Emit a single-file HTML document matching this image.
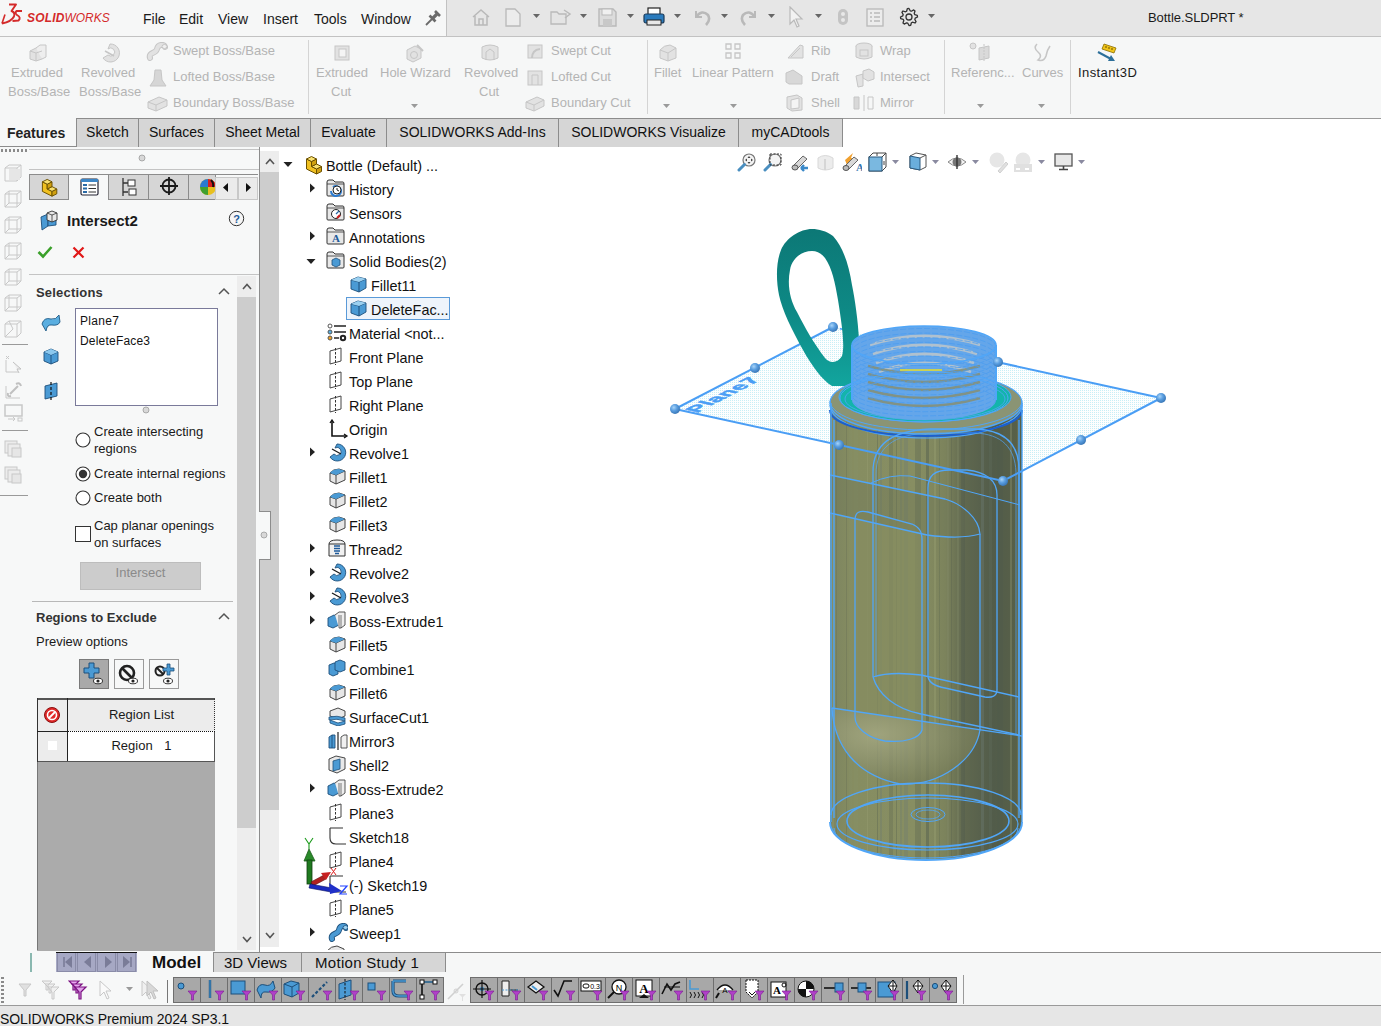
<!DOCTYPE html>
<html><head><meta charset="utf-8">
<style>
*{box-sizing:border-box;margin:0;padding:0}
html,body{width:1381px;height:1026px;overflow:hidden;background:#fff;font-family:"Liberation Sans",sans-serif;color:#000}
.a{position:absolute;display:block}
.t{position:absolute;white-space:nowrap;line-height:1}
</style></head><body>
<div class="a" style="left:0px;top:0px;width:446px;height:36px;background:#f6f7f7;"></div>
<div class="a" style="left:447px;top:0px;width:934px;height:36px;background:#e6e6e6;"></div>
<div class="a" style="left:446px;top:0px;width:1px;height:36px;background:#c2c2c2;"></div>
<div class="a" style="left:0px;top:36px;width:1381px;height:1px;background:#c2c2c2;"></div>
<div class="a" style="left:0px;top:37px;width:1381px;height:81px;background:#f6f7f7;"></div>
<svg class="a" style="left:0px;top:0px;" width="26" height="28" viewBox="0 0 26 28"><path d="M9 4.5 L16 4.5 L11.5 11 Q15.5 12.5 14 16.5 Q11.5 21.5 2 23.5" stroke="#d42a2a" stroke-width="1.9" fill="none" stroke-linejoin="round"/><path d="M5 14.5 L2 23.5" stroke="#d42a2a" stroke-width="1.6"/><path d="M22 11 L16.5 11 Q14.5 13 17 15 Q21.5 17.5 18.5 20.5 L12.5 21" stroke="#d42a2a" stroke-width="1.9" fill="none" stroke-linejoin="round"/></svg>
<div class="t" style="left:27px;top:12px;font-size:12px;color:#d42a2a;font-style:italic;letter-spacing:0px;transform-origin:0 0;transform:scaleX(0.995)"><b style="letter-spacing:0.2px">SOLID</b>WORKS</div>
<div class="t" style="left:143px;top:12px;font-size:14px;color:#1a1a1a;font-weight:normal;">File</div>
<div class="t" style="left:179px;top:12px;font-size:14px;color:#1a1a1a;font-weight:normal;">Edit</div>
<div class="t" style="left:218px;top:12px;font-size:14px;color:#1a1a1a;font-weight:normal;">View</div>
<div class="t" style="left:263px;top:12px;font-size:14px;color:#1a1a1a;font-weight:normal;">Insert</div>
<div class="t" style="left:314px;top:12px;font-size:14px;color:#1a1a1a;font-weight:normal;">Tools</div>
<div class="t" style="left:361px;top:12px;font-size:14px;color:#1a1a1a;font-weight:normal;">Window</div>
<svg class="a" style="left:424px;top:8px;" width="19" height="19" viewBox="0 0 19 19"><path d="M2 17 L8 11" stroke="#6a6a6a" stroke-width="1.8"/><path d="M5.5 7.5 L11.5 13.5" stroke="#6a6a6a" stroke-width="2.6"/><path d="M8.5 10.5 L13.5 5.5" stroke="#6a6a6a" stroke-width="3.2"/><path d="M11 3 L16 8" stroke="#6a6a6a" stroke-width="2.6"/></svg>
<svg class="a" style="left:471px;top:8px;" width="20" height="18" viewBox="0 0 20 18"><path d="M2 9 L10 2 L18 9 M4 8 V17 H16 V8 M8 17 V11 H12 V17" stroke="#b9b9b9" stroke-width="1.5" fill="none"/></svg>
<svg class="a" style="left:505px;top:8px;" width="16" height="19" viewBox="0 0 16 19"><path d="M1 1 H10 L15 6 V18 H1 Z" stroke="#b9b9b9" stroke-width="1.3" fill="#ececec"/></svg>
<svg class="a" style="left:533px;top:14px;" width="8" height="5" viewBox="0 0 8 5"><path d="M0 0 H7 L3.5 4 Z" fill="#666"/></svg>
<svg class="a" style="left:550px;top:8px;" width="22" height="18" viewBox="0 0 22 18"><path d="M1 4 H7 L9 6 H16 V16 H1 Z" stroke="#b9b9b9" stroke-width="1.3" fill="#e4e4e4"/><path d="M14 2 L20 6 L15 10" stroke="#b9b9b9" stroke-width="1.5" fill="none"/></svg>
<svg class="a" style="left:580px;top:14px;" width="8" height="5" viewBox="0 0 8 5"><path d="M0 0 H7 L3.5 4 Z" fill="#666"/></svg>
<svg class="a" style="left:598px;top:8px;" width="19" height="19" viewBox="0 0 19 19"><path d="M1 1 H15 L18 4 V18 H1 Z" stroke="#b9b9b9" stroke-width="1.4" fill="#dcdcdc"/><rect x="4" y="1" width="10" height="6" fill="#f0f0f0" stroke="#b9b9b9"/><rect x="5" y="11" width="9" height="7" fill="#c8c8c8"/></svg>
<svg class="a" style="left:627px;top:14px;" width="8" height="5" viewBox="0 0 8 5"><path d="M0 0 H7 L3.5 4 Z" fill="#666"/></svg>
<svg class="a" style="left:643px;top:7px;" width="22" height="20" viewBox="0 0 22 20"><rect x="5" y="1" width="12" height="7" fill="#fff" stroke="#222" stroke-width="1.2"/><rect x="1" y="7" width="20" height="9" rx="2" fill="#2a7bbd" stroke="#1b3b5a" stroke-width="1.2"/><rect x="4" y="13" width="14" height="5" fill="#e8e8e8" stroke="#222"/></svg>
<svg class="a" style="left:674px;top:14px;" width="8" height="5" viewBox="0 0 8 5"><path d="M0 0 H7 L3.5 4 Z" fill="#666"/></svg>
<svg class="a" style="left:692px;top:8px;" width="20" height="18" viewBox="0 0 20 18"><path d="M4 3 V9 H10" stroke="#b9b9b9" stroke-width="2" fill="none"/><path d="M4 9 Q10 1 16 7 Q19 12 14 17" stroke="#b9b9b9" stroke-width="2.6" fill="none"/></svg>
<svg class="a" style="left:721px;top:14px;" width="8" height="5" viewBox="0 0 8 5"><path d="M0 0 H7 L3.5 4 Z" fill="#666"/></svg>
<svg class="a" style="left:739px;top:8px;" width="20" height="18" viewBox="0 0 20 18"><path d="M16 3 V9 H10" stroke="#b9b9b9" stroke-width="2" fill="none"/><path d="M16 9 Q10 1 4 7 Q1 12 6 17" stroke="#b9b9b9" stroke-width="2.6" fill="none"/></svg>
<svg class="a" style="left:768px;top:14px;" width="8" height="5" viewBox="0 0 8 5"><path d="M0 0 H7 L3.5 4 Z" fill="#666"/></svg>
<svg class="a" style="left:788px;top:6px;" width="16" height="22" viewBox="0 0 16 22"><path d="M2 1 L14 13 H8 L11 20 L9 21 L6 14 L2 18 Z" stroke="#b9b9b9" stroke-width="1.2" fill="#f2f2f2"/></svg>
<svg class="a" style="left:815px;top:14px;" width="8" height="5" viewBox="0 0 8 5"><path d="M0 0 H7 L3.5 4 Z" fill="#666"/></svg>
<svg class="a" style="left:837px;top:8px;" width="12" height="18" viewBox="0 0 12 18"><rect x="1" y="1" width="10" height="16" rx="5" fill="#c4c4c4"/><circle cx="6" cy="6" r="2" fill="#e8e8e8"/><circle cx="6" cy="12" r="2" fill="#e8e8e8"/></svg>
<svg class="a" style="left:866px;top:8px;" width="19" height="19" viewBox="0 0 19 19"><rect x="1" y="1" width="16" height="17" fill="#ececec" stroke="#b9b9b9" stroke-width="1.3"/><path d="M4 5 H6 M8 5 H14 M4 9 H6 M8 9 H14 M4 13 H6 M8 13 H14" stroke="#b9b9b9" stroke-width="1.5"/></svg>
<svg class="a" style="left:899px;top:7px;" width="20" height="20" viewBox="0 0 20 20"><path d="M18.3 8.3 L18.5 10.0 L16.2 11.2 L15.8 12.4 L17.1 14.7 L16.0 16.0 L13.5 15.2 L12.4 15.8 L11.7 18.3 L10.0 18.5 L8.8 16.2 L7.6 15.8 L5.3 17.1 L4.0 16.0 L4.8 13.5 L4.2 12.4 L1.7 11.7 L1.5 10.0 L3.8 8.8 L4.2 7.6 L2.9 5.3 L4.0 4.0 L6.5 4.8 L7.6 4.2 L8.3 1.7 L10.0 1.5 L11.2 3.8 L12.4 4.2 L14.7 2.9 L16.0 4.0 L15.2 6.5 L15.8 7.6 Z" fill="none" stroke="#333" stroke-width="1.3" stroke-linejoin="round"/><circle cx="10" cy="10" r="3" fill="none" stroke="#333" stroke-width="1.3"/></svg>
<svg class="a" style="left:928px;top:14px;" width="8" height="5" viewBox="0 0 8 5"><path d="M0 0 H7 L3.5 4 Z" fill="#666"/></svg>
<div class="t" style="left:1148px;top:11px;font-size:13px;color:#1a1a1a;font-weight:normal;letter-spacing:-0.05px">Bottle.SLDPRT *</div>
<div class="a" style="left:308px;top:40px;width:1px;height:74px;background:#d4d4d4;"></div>
<div class="a" style="left:647px;top:40px;width:1px;height:74px;background:#d4d4d4;"></div>
<div class="a" style="left:944px;top:40px;width:1px;height:74px;background:#d4d4d4;"></div>
<div class="a" style="left:1070px;top:40px;width:1px;height:74px;background:#d4d4d4;"></div>
<svg class="a" style="left:28px;top:43px;" width="20" height="19" viewBox="0 0 20 19"><path d="M2 8 L8 5 L14 8 V16 L8 18 L2 16 Z" fill="#e2e2e2" stroke="#c6c6c6"/><path d="M8 5 L12 2 H18 V14 L14 16" fill="#eeeeee" stroke="#c6c6c6"/><path d="M2 8 L8 10 L14 8 M8 10 V18" stroke="#c6c6c6" fill="none"/></svg>
<div class="t" style="left:11px;top:66px;font-size:13px;color:#b4b4b4;font-weight:normal;">Extruded</div>
<div class="t" style="left:8px;top:85px;font-size:13px;color:#b4b4b4;font-weight:normal;">Boss/Base</div>
<svg class="a" style="left:100px;top:43px;" width="20" height="20" viewBox="0 0 20 20"><path d="M10 1 A9 9 0 1 1 3 15 L8 12 A4 4 0 1 0 8 6 Z" fill="#e2e2e2" stroke="#c6c6c6"/><path d="M5 8 L14 13" stroke="#c6c6c6" stroke-width="1.5"/></svg>
<div class="t" style="left:81px;top:66px;font-size:13px;color:#b4b4b4;font-weight:normal;">Revolved</div>
<div class="t" style="left:79px;top:85px;font-size:13px;color:#b4b4b4;font-weight:normal;">Boss/Base</div>
<svg class="a" style="left:146px;top:42px;" width="22" height="19" viewBox="0 0 22 19"><path d="M4 16 C2 10 10 12 11 7 C12 2 18 2 19 5" stroke="#c6c6c6" stroke-width="6" fill="none" stroke-linecap="round"/><path d="M4 16 C2 10 10 12 11 7 C12 2 18 2 19 5" stroke="#e2e2e2" stroke-width="4" fill="none" stroke-linecap="round"/><ellipse cx="18.5" cy="4.5" rx="2.5" ry="2" fill="#f0f0f0" stroke="#c6c6c6"/></svg>
<div class="t" style="left:173px;top:44px;font-size:13px;color:#b4b4b4;font-weight:normal;">Swept Boss/Base</div>
<svg class="a" style="left:149px;top:68px;" width="18" height="19" viewBox="0 0 18 19"><path d="M6 2 H12 L13 12 L17 18 H1 L5 12 Z" fill="#d6d6d6" stroke="#c6c6c6"/></svg>
<div class="t" style="left:173px;top:70px;font-size:13px;color:#b4b4b4;font-weight:normal;">Lofted Boss/Base</div>
<svg class="a" style="left:147px;top:94px;" width="22" height="18" viewBox="0 0 22 18"><path d="M1 8 L12 3 L20 6 V12 L9 17 L1 14 Z" fill="#e2e2e2" stroke="#c6c6c6"/><path d="M1 8 L9 11 L20 6 M9 11 V17" stroke="#c6c6c6" fill="none"/></svg>
<div class="t" style="left:173px;top:96px;font-size:13px;color:#b4b4b4;font-weight:normal;">Boundary Boss/Base</div>
<svg class="a" style="left:333px;top:43px;" width="19" height="19" viewBox="0 0 19 19"><rect x="2" y="3" width="14" height="14" fill="#e2e2e2" stroke="#c6c6c6"/><rect x="6" y="6" width="7" height="8" fill="#f4f4f4" stroke="#c6c6c6"/></svg>
<div class="t" style="left:316px;top:66px;font-size:13px;color:#b4b4b4;font-weight:normal;">Extruded</div>
<div class="t" style="left:331px;top:85px;font-size:13px;color:#b4b4b4;font-weight:normal;">Cut</div>
<svg class="a" style="left:405px;top:42px;" width="20" height="21" viewBox="0 0 20 21"><path d="M2 8 L10 4 L16 7 V16 L8 20 L2 17 Z" fill="#e2e2e2" stroke="#c6c6c6"/><circle cx="9" cy="13" r="3.5" fill="none" stroke="#c6c6c6"/><path d="M12 3 L18 9" stroke="#c6c6c6" stroke-width="2"/></svg>
<div class="t" style="left:380px;top:66px;font-size:13px;color:#b4b4b4;font-weight:normal;">Hole Wizard</div>
<svg class="a" style="left:411px;top:104px;" width="8" height="5" viewBox="0 0 8 5"><path d="M0 0 H7 L3.5 4 Z" fill="#9a9a9a"/></svg>
<svg class="a" style="left:480px;top:43px;" width="20" height="19" viewBox="0 0 20 19"><path d="M2 4 Q10 0 18 4 V15 Q10 19 2 15 Z" fill="#e2e2e2" stroke="#c6c6c6"/><path d="M10 6 L6 9 V17 M10 6 L14 9 V17" stroke="#c6c6c6" fill="none"/></svg>
<div class="t" style="left:464px;top:66px;font-size:13px;color:#b4b4b4;font-weight:normal;">Revolved</div>
<div class="t" style="left:479px;top:85px;font-size:13px;color:#b4b4b4;font-weight:normal;">Cut</div>
<svg class="a" style="left:526px;top:42px;" width="18" height="18" viewBox="0 0 18 18"><rect x="2" y="3" width="14" height="13" fill="#e2e2e2" stroke="#c6c6c6"/><path d="M6 16 Q6 8 14 7" stroke="#c6c6c6" fill="none" stroke-width="2"/></svg>
<div class="t" style="left:551px;top:44px;font-size:13px;color:#b4b4b4;font-weight:normal;">Swept Cut</div>
<svg class="a" style="left:526px;top:68px;" width="18" height="19" viewBox="0 0 18 19"><rect x="2" y="3" width="14" height="14" fill="#e2e2e2" stroke="#c6c6c6"/><path d="M6 17 V7 H12 V17" stroke="#c6c6c6" fill="none"/></svg>
<div class="t" style="left:551px;top:70px;font-size:13px;color:#b4b4b4;font-weight:normal;">Lofted Cut</div>
<svg class="a" style="left:525px;top:94px;" width="20" height="18" viewBox="0 0 20 18"><path d="M1 8 L12 3 L19 6 V12 L9 17 L1 14 Z" fill="#e2e2e2" stroke="#c6c6c6"/><path d="M1 8 L9 11 L19 6 M9 11 V17" stroke="#c6c6c6" fill="none"/></svg>
<div class="t" style="left:551px;top:96px;font-size:13px;color:#b4b4b4;font-weight:normal;">Boundary Cut</div>
<svg class="a" style="left:658px;top:43px;" width="20" height="19" viewBox="0 0 20 19"><path d="M2 7 Q6 2 12 2 L18 5 V15 L10 18 L2 15 Z" fill="#e2e2e2" stroke="#c6c6c6"/><path d="M2 7 L10 10 L18 5 M10 10 V18" stroke="#c6c6c6" fill="none"/></svg>
<div class="t" style="left:654px;top:66px;font-size:13px;color:#b4b4b4;font-weight:normal;">Fillet</div>
<svg class="a" style="left:663px;top:104px;" width="8" height="5" viewBox="0 0 8 5"><path d="M0 0 H7 L3.5 4 Z" fill="#9a9a9a"/></svg>
<svg class="a" style="left:725px;top:43px;" width="18" height="18" viewBox="0 0 18 18"><path d="M1 1 H6 V6 H1 Z M10 1 H15 V6 H10 Z M1 10 H6 V15 H1 Z M10 10 H15 V15 H10 Z" fill="none" stroke="#c6c6c6" stroke-width="1.3"/></svg>
<div class="t" style="left:692px;top:66px;font-size:13px;color:#b4b4b4;font-weight:normal;">Linear Pattern</div>
<svg class="a" style="left:730px;top:104px;" width="8" height="5" viewBox="0 0 8 5"><path d="M0 0 H7 L3.5 4 Z" fill="#9a9a9a"/></svg>
<svg class="a" style="left:786px;top:42px;" width="19" height="19" viewBox="0 0 19 19"><path d="M2 16 L14 3 L17 4 V16 Z" fill="#e2e2e2" stroke="#c6c6c6"/><path d="M5 15 L14 6" stroke="#c6c6c6"/></svg>
<div class="t" style="left:811px;top:44px;font-size:13px;color:#b4b4b4;font-weight:normal;">Rib</div>
<svg class="a" style="left:785px;top:68px;" width="20" height="18" viewBox="0 0 20 18"><path d="M1 5 L8 2 L17 8 V16 H4 L1 14 Z" fill="#d8d8d8" stroke="#c6c6c6"/></svg>
<div class="t" style="left:811px;top:70px;font-size:13px;color:#b4b4b4;font-weight:normal;">Draft</div>
<svg class="a" style="left:785px;top:94px;" width="19" height="18" viewBox="0 0 19 18"><path d="M2 3 L12 1 L17 4 V16 L7 17 L2 14 Z" fill="#e2e2e2" stroke="#c6c6c6"/><path d="M6 6 L14 4 V14 L6 15 Z" fill="#f4f4f4" stroke="#c6c6c6"/></svg>
<div class="t" style="left:811px;top:96px;font-size:13px;color:#b4b4b4;font-weight:normal;">Shell</div>
<svg class="a" style="left:854px;top:42px;" width="20" height="19" viewBox="0 0 20 19"><ellipse cx="10" cy="4" rx="8" ry="3" fill="#e2e2e2" stroke="#c6c6c6"/><path d="M2 4 V15 Q10 19 18 15 V4" fill="#e2e2e2" stroke="#c6c6c6"/><rect x="6" y="8" width="8" height="6" fill="none" stroke="#c6c6c6"/></svg>
<div class="t" style="left:880px;top:44px;font-size:13px;color:#b4b4b4;font-weight:normal;">Wrap</div>
<svg class="a" style="left:855px;top:68px;" width="20" height="20" viewBox="0 0 20 20"><path d="M1 8 L8 6 V18 L3 19 Z" fill="#e2e2e2" stroke="#c6c6c6"/><path d="M8 3 L14 1 L19 4 V11 L13 13 L8 10 Z" fill="#e2e2e2" stroke="#c6c6c6"/></svg>
<div class="t" style="left:880px;top:70px;font-size:13px;color:#b4b4b4;font-weight:normal;">Intersect</div>
<svg class="a" style="left:853px;top:94px;" width="22" height="18" viewBox="0 0 22 18"><path d="M1 3 H6 V15 H1 Z" fill="#d8d8d8" stroke="#c6c6c6"/><path d="M11 1 V17" stroke="#c6c6c6"/><path d="M15 3 H20 V15 H15 Z" fill="none" stroke="#c6c6c6"/></svg>
<div class="t" style="left:880px;top:96px;font-size:13px;color:#b4b4b4;font-weight:normal;">Mirror</div>
<svg class="a" style="left:969px;top:42px;" width="24" height="20" viewBox="0 0 24 20"><circle cx="4" cy="4" r="3" fill="#e2e2e2" stroke="#c6c6c6"/><path d="M10 6 L20 4 V16 L10 18 Z" fill="#dadada" stroke="#c6c6c6"/><path d="M15 2 V20" stroke="#c6c6c6" stroke-dasharray="2 1"/></svg>
<div class="t" style="left:951px;top:66px;font-size:13px;color:#b4b4b4;font-weight:normal;">Referenc...</div>
<svg class="a" style="left:977px;top:104px;" width="8" height="5" viewBox="0 0 8 5"><path d="M0 0 H7 L3.5 4 Z" fill="#9a9a9a"/></svg>
<svg class="a" style="left:1032px;top:42px;" width="20" height="20" viewBox="0 0 20 20"><path d="M5 2 Q1 6 6 10 Q11 14 6 18 Q12 20 14 14 Q15 8 18 4" stroke="#c6c6c6" stroke-width="1.6" fill="none"/></svg>
<div class="t" style="left:1022px;top:66px;font-size:13px;color:#b4b4b4;font-weight:normal;">Curves</div>
<svg class="a" style="left:1038px;top:104px;" width="8" height="5" viewBox="0 0 8 5"><path d="M0 0 H7 L3.5 4 Z" fill="#9a9a9a"/></svg>
<svg class="a" style="left:1097px;top:43px;" width="20" height="19" viewBox="0 0 20 19"><path d="M7 1 L19 5 L17 10 L5 6 Z" fill="#f0c419" stroke="#8a6d00" stroke-width="0.8"/><path d="M9 3 V5 M12 4 V6 M15 5 V7" stroke="#6a5200"/><path d="M1 9 L14 16" stroke="#2d6f9a" stroke-width="2"/><path d="M11 18 L18 18 L14 12 Z" fill="#2d6f9a"/></svg>
<div class="t" style="left:1078px;top:66px;font-size:13px;color:#1a1a1a;font-weight:normal;letter-spacing:0.4px">Instant3D</div>
<div class="a" style="left:76px;top:118px;width:1305px;height:1px;background:#9a9a9a;"></div>
<div class="a" style="left:0px;top:118px;width:76px;height:28px;background:#f6f7f7;"></div>
<div class="a" style="left:0px;top:146px;width:842px;height:1px;background:#8c8c8c;"></div>
<div class="t" style="left:7px;top:126px;font-size:14px;color:#222;font-weight:bold;">Features</div>
<div class="a" style="left:76px;top:118px;width:63px;height:29px;background:#d6d6d6;border:1px solid #8c8c8c;border-bottom:none"></div>
<div class="t" style="left:76px;width:63px;text-align:center;top:125px;font-size:14px;color:#111">Sketch</div>
<div class="a" style="left:138px;top:118px;width:77px;height:29px;background:#d6d6d6;border:1px solid #8c8c8c;border-bottom:none"></div>
<div class="t" style="left:138px;width:77px;text-align:center;top:125px;font-size:14px;color:#111">Surfaces</div>
<div class="a" style="left:214px;top:118px;width:97px;height:29px;background:#d6d6d6;border:1px solid #8c8c8c;border-bottom:none"></div>
<div class="t" style="left:214px;width:97px;text-align:center;top:125px;font-size:14px;color:#111">Sheet Metal</div>
<div class="a" style="left:310px;top:118px;width:77px;height:29px;background:#d6d6d6;border:1px solid #8c8c8c;border-bottom:none"></div>
<div class="t" style="left:310px;width:77px;text-align:center;top:125px;font-size:14px;color:#111">Evaluate</div>
<div class="a" style="left:386px;top:118px;width:173px;height:29px;background:#d6d6d6;border:1px solid #8c8c8c;border-bottom:none"></div>
<div class="t" style="left:386px;width:173px;text-align:center;top:125px;font-size:14px;color:#111">SOLIDWORKS Add-Ins</div>
<div class="a" style="left:558px;top:118px;width:181px;height:29px;background:#d6d6d6;border:1px solid #8c8c8c;border-bottom:none"></div>
<div class="t" style="left:558px;width:181px;text-align:center;top:125px;font-size:14px;color:#111">SOLIDWORKS Visualize</div>
<div class="a" style="left:738px;top:118px;width:105px;height:29px;background:#d6d6d6;border:1px solid #8c8c8c;border-bottom:none"></div>
<div class="t" style="left:738px;width:105px;text-align:center;top:125px;font-size:14px;color:#111">myCADtools</div>
<div class="a" style="left:0px;top:147px;width:259px;height:805px;background:#f7f8f8;"></div>
<div class="a" style="left:1px;top:149px;width:26px;height:3px;background:repeating-linear-gradient(90deg,#8a8a8a 0 2px,transparent 2px 4px)"></div>
<svg class="a" style="left:4px;top:164px;" width="19" height="19" viewBox="0 0 19 19"><path d="M1 4 L5 1 H17 V13 L13 17 H1 Z" fill="none" stroke="#c8c8c8"/><path d="M1 4 H13 V17 M13 4 L17 1" stroke="#c8c8c8" fill="none"/><rect x="5" y="5" width="11" height="11" fill="#e6e6e6"/></svg>
<svg class="a" style="left:4px;top:190px;" width="19" height="19" viewBox="0 0 19 19"><path d="M1 4 L5 1 H17 V13 L13 17 H1 Z" fill="none" stroke="#c8c8c8"/><path d="M1 4 H13 V17 M13 4 L17 1" stroke="#c8c8c8" fill="none"/><path d="M5 1 V13 H17 M1 17 L5 13" stroke="#c8c8c8" fill="none"/></svg>
<svg class="a" style="left:4px;top:216px;" width="19" height="19" viewBox="0 0 19 19"><path d="M1 4 L5 1 H17 V13 L13 17 H1 Z" fill="none" stroke="#c8c8c8"/><path d="M1 4 H13 V17 M13 4 L17 1" stroke="#c8c8c8" fill="none"/><path d="M5 1 V13 H17 M1 17 L5 13" stroke="#c8c8c8" fill="none"/></svg>
<svg class="a" style="left:4px;top:242px;" width="19" height="19" viewBox="0 0 19 19"><path d="M1 4 L5 1 H17 V13 L13 17 H1 Z" fill="none" stroke="#c8c8c8"/><path d="M1 4 H13 V17 M13 4 L17 1" stroke="#c8c8c8" fill="none"/><path d="M5 1 V13 H17 M1 17 L5 13" stroke="#c8c8c8" fill="none"/></svg>
<svg class="a" style="left:4px;top:268px;" width="19" height="19" viewBox="0 0 19 19"><path d="M1 4 L5 1 H17 V13 L13 17 H1 Z" fill="none" stroke="#c8c8c8"/><path d="M1 4 H13 V17 M13 4 L17 1" stroke="#c8c8c8" fill="none"/><path d="M5 1 V13 H17 M1 17 L5 13" stroke="#c8c8c8" fill="none"/></svg>
<svg class="a" style="left:4px;top:294px;" width="19" height="19" viewBox="0 0 19 19"><path d="M1 4 L5 1 H17 V13 L13 17 H1 Z" fill="none" stroke="#c8c8c8"/><path d="M1 4 H13 V17 M13 4 L17 1" stroke="#c8c8c8" fill="none"/><path d="M5 1 V13 H17 M1 17 L5 13" stroke="#c8c8c8" fill="none"/></svg>
<svg class="a" style="left:4px;top:320px;" width="19" height="19" viewBox="0 0 19 19"><path d="M1 4 L5 1 H17 V13 L13 17 H1 Z" fill="none" stroke="#c8c8c8"/><path d="M1 4 L13 4 L17 1 M13 4 V17 M5 1 L9 9 L1 17" stroke="#c8c8c8" fill="none"/></svg>
<div class="a" style="left:2px;top:344px;width:26px;height:1px;background:#9a9a9a;"></div>
<svg class="a" style="left:4px;top:354px;" width="20" height="20" viewBox="0 0 20 20"><path d="M2 6 V18 H14" stroke="#c8c8c8" fill="none"/><path d="M2 2 L5 5 M5 2 L2 5" stroke="#c8c8c8"/><path d="M9 8 L17 15 L13 15 L15 19" stroke="#c0c0c0" fill="#eee"/></svg>
<svg class="a" style="left:4px;top:380px;" width="20" height="20" viewBox="0 0 20 20"><path d="M2 6 V18 H16" stroke="#c8c8c8" fill="none"/><path d="M6 14 L14 6 M12 4 Q16 2 17 6 M7 16 Q3 17 4 13" stroke="#c0c0c0" stroke-width="2" fill="none"/></svg>
<svg class="a" style="left:4px;top:404px;" width="20" height="18" viewBox="0 0 20 18"><rect x="1" y="1" width="17" height="11" fill="none" stroke="#c8c8c8" stroke-width="1.5"/><path d="M4 15 H11 L9 13 M11 15 L9 17" stroke="#c8c8c8" fill="none"/><rect x="14" y="14" width="4" height="3" fill="none" stroke="#c8c8c8"/></svg>
<div class="a" style="left:2px;top:430px;width:26px;height:1px;background:#9a9a9a;"></div>
<svg class="a" style="left:4px;top:440px;" width="19" height="19" viewBox="0 0 19 19"><rect x="1" y="1" width="12" height="12" fill="#ececec" stroke="#c8c8c8"/><rect x="4" y="4" width="12" height="12" fill="#ececec" stroke="#c8c8c8"/><rect x="8" y="8" width="9" height="9" fill="#e6e6e6" stroke="#c8c8c8"/></svg>
<svg class="a" style="left:4px;top:466px;" width="19" height="19" viewBox="0 0 19 19"><rect x="1" y="1" width="12" height="12" fill="#ececec" stroke="#c8c8c8"/><rect x="4" y="4" width="12" height="12" fill="#ececec" stroke="#c8c8c8"/><rect x="8" y="8" width="9" height="9" fill="#e6e6e6" stroke="#c8c8c8"/></svg>
<div class="a" style="left:0px;top:495px;width:28px;height:1px;background:#9a9a9a;"></div>
<div class="a" style="left:29px;top:149px;width:230px;height:1px;background:#c4c4c4;"></div>
<svg class="a" style="left:138px;top:154px;" width="8" height="8" viewBox="0 0 8 8"><circle cx="4" cy="4" r="3" fill="#d8d8d8" stroke="#9a9a9a" stroke-width="0.8"/></svg>
<div class="a" style="left:29px;top:169px;width:230px;height:1px;background:#c4c4c4;"></div>
<div class="a" style="left:29px;top:174px;width:229px;height:1px;background:#8c8c8c;"></div>
<div class="a" style="left:29px;top:174px;width:40px;height:26px;background:#d6d6d6;border:1px solid #8c8c8c;border-bottom:1px solid #8c8c8c"></div>
<div class="a" style="left:68px;top:174px;width:41px;height:26px;background:#f7f8f8;border:1px solid #8c8c8c;border-bottom:none"></div>
<div class="a" style="left:108px;top:174px;width:41px;height:26px;background:#d6d6d6;border:1px solid #8c8c8c;border-bottom:1px solid #8c8c8c"></div>
<div class="a" style="left:148px;top:174px;width:41px;height:26px;background:#d6d6d6;border:1px solid #8c8c8c;border-bottom:1px solid #8c8c8c"></div>
<div class="a" style="left:188px;top:174px;width:28px;height:26px;background:#d6d6d6;border:1px solid #8c8c8c;border-bottom:1px solid #8c8c8c"></div>
<svg class="a" style="left:40px;top:177px;" width="20" height="20" viewBox="0 0 20 20"><g transform="translate(0 0) scale(1.2)" stroke="#6b5000" stroke-width="0.8" stroke-linejoin="round"><path d="M2 12 L10 16 L10 12 L6 10 L6 6 L2 4 Z" fill="#f0c020"/><path d="M10 16 L14 14 L14 10 L10 12 Z" fill="#d0a010"/><path d="M6 10 L10 12 L14 10 L10 8 Z" fill="#f8e070"/><path d="M6 10 L10 8 L10 4 L6 6 Z" fill="#d0a010"/><path d="M2 4 L6 6 L10 4 L6 2 Z" fill="#f8e070"/></g></svg>
<svg class="a" style="left:80px;top:178px;" width="19" height="18" viewBox="0 0 19 18"><rect x="1" y="1" width="17" height="16" rx="1.5" fill="#fff" stroke="#223" stroke-width="1.2"/><rect x="1" y="1" width="17" height="3" fill="#3d86c6"/><rect x="3" y="6" width="4" height="2" fill="#2a6aa6"/><rect x="3" y="9.5" width="4" height="2" fill="#2a6aa6"/><rect x="3" y="13" width="4" height="2" fill="#2a6aa6"/><path d="M8.5 7 H16 M8.5 10.5 H16 M8.5 14 H16" stroke="#333" stroke-width="1"/></svg>
<svg class="a" style="left:121px;top:177px;" width="17" height="20" viewBox="0 0 17 20"><path d="M2 1 V19 M2 6 H7 M2 15 H7" stroke="#333" stroke-width="1.3" fill="none"/><rect x="7" y="3" width="7" height="6" fill="#fff" stroke="#333"/><rect x="8" y="12" width="7" height="6" fill="#fff" stroke="#333"/></svg>
<svg class="a" style="left:159px;top:176px;" width="20" height="20" viewBox="0 0 20 20"><circle cx="10" cy="10" r="6.5" fill="none" stroke="#1a1a1a" stroke-width="1.8"/><path d="M10 1 V19 M1 10 H19" stroke="#1a1a1a" stroke-width="1.8"/></svg>
<svg class="a" style="left:199px;top:178px;overflow:hidden" width="16" height="19" viewBox="0 0 16 19"><circle cx="9" cy="9" r="8" fill="#e8c020"/><path d="M9 9 L9 1 A8 8 0 0 1 17 9 Z" fill="#d42020"/><path d="M9 9 L1 9 A8 8 0 0 1 9 1 Z" fill="#2a7ad0"/><path d="M9 9 L1 9 A8 8 0 0 0 9 17 Z" fill="#40a030"/><path d="M12 2 Q15 5 14 9" stroke="#111" stroke-width="2" fill="none"/></svg>
<div class="a" style="left:215px;top:177px;width:23px;height:23px;background:#ebebeb;border:1px solid #c8c8c8"></div>
<div class="a" style="left:238px;top:177px;width:20px;height:23px;background:#ebebeb;border:1px solid #c8c8c8"></div>
<svg class="a" style="left:222px;top:183px;" width="8" height="10" viewBox="0 0 8 10"><path d="M6 0 V9 L1 4.5 Z" fill="#111"/></svg>
<svg class="a" style="left:245px;top:183px;" width="8" height="10" viewBox="0 0 8 10"><path d="M1 0 V9 L6 4.5 Z" fill="#111"/></svg>
<svg class="a" style="left:39px;top:209px;" width="22" height="22" viewBox="0 0 22 22"><path d="M2 8 L9 5 V17 L3 21 Z" fill="#4a9ad4" stroke="#1d4f7a" stroke-width="0.9"/><path d="M9 9 L17 7 V16 L9 17 Z" fill="#4a9ad4" stroke="#1d4f7a" stroke-width="0.9"/><path d="M8 4 L13 2 L18 4 V11 L13 13 L8 11 Z" fill="#e8e8e8" stroke="#333" stroke-width="0.9"/><path d="M8 4 L13 6 L18 4 M13 6 V13" stroke="#333" stroke-width="0.8" fill="none"/></svg>
<div class="t" style="left:67px;top:213px;font-size:15px;color:#1a1a1a;font-weight:bold;">Intersect2</div>
<svg class="a" style="left:228px;top:210px;" width="17" height="17" viewBox="0 0 17 17"><circle cx="8.5" cy="8.5" r="7.2" fill="#f6f6f6" stroke="#333" stroke-width="1"/><text x="8.5" y="13" font-size="11" font-weight="bold" text-anchor="middle" fill="#1d5a9a" font-family="Liberation Sans">?</text></svg>
<svg class="a" style="left:37px;top:245px;" width="16" height="14" viewBox="0 0 16 14"><path d="M1.5 7 L6 11.5 L14.5 2" stroke="#3aa02a" stroke-width="2.6" fill="none"/></svg>
<svg class="a" style="left:72px;top:246px;" width="13" height="13" viewBox="0 0 13 13"><path d="M1.5 1.5 L11.5 11.5 M11.5 1.5 L1.5 11.5" stroke="#e01818" stroke-width="2.2"/></svg>
<div class="a" style="left:29px;top:274px;width:230px;height:1px;background:#c4c4c4;"></div>
<div class="a" style="left:237px;top:276px;width:19px;height:21px;background:#ededed;"></div>
<svg class="a" style="left:242px;top:283px;" width="10" height="7" viewBox="0 0 10 7"><path d="M1 6 L5 1.5 L9 6" stroke="#555" stroke-width="1.6" fill="none"/></svg>
<div class="a" style="left:237px;top:297px;width:19px;height:531px;background:#cdcdcd;"></div>
<div class="a" style="left:237px;top:828px;width:19px;height:123px;background:#ededed;"></div>
<svg class="a" style="left:242px;top:936px;" width="10" height="7" viewBox="0 0 10 7"><path d="M1 1 L5 5.5 L9 1" stroke="#555" stroke-width="1.6" fill="none"/></svg>
<div class="t" style="left:36px;top:286px;font-size:13px;color:#333;font-weight:bold;letter-spacing:0.2px">Selections</div>
<svg class="a" style="left:218px;top:287px;" width="12" height="8" viewBox="0 0 12 8"><path d="M1 7 L6 2 L11 7" stroke="#555" stroke-width="1.5" fill="none"/></svg>
<div class="a" style="left:75px;top:308px;width:143px;height:98px;background:#fff;border:1px solid #7a7a9a"></div>
<div class="t" style="left:80px;top:315px;font-size:12px;color:#111;font-weight:normal;letter-spacing:0.3px">Plane7</div>
<div class="t" style="left:80px;top:335px;font-size:12px;color:#111;font-weight:normal;letter-spacing:0.2px">DeleteFace3</div>
<svg class="a" style="left:142px;top:406px;" width="8" height="8" viewBox="0 0 8 8"><circle cx="4" cy="4" r="3" fill="#d8d8d8" stroke="#9a9a9a" stroke-width="0.8"/></svg>
<svg class="a" style="left:41px;top:313px;" width="20" height="19" viewBox="0 0 20 19"><path d="M1 11 Q3 4 10 6 Q15 7 18 2 L19 9 Q17 13 11 12 Q6 11 5 18 Z" fill="#5aaee0" stroke="#1f5a86" stroke-width="0.9"/></svg>
<svg class="a" style="left:42px;top:347px;" width="18" height="19" viewBox="0 0 18 19"><path d="M2 5 L9 2 L16 5 V14 L9 17 L2 14 Z" fill="#4a9ad4" stroke="#1d4f7a" stroke-width="0.9"/><path d="M2 5 L9 8 L16 5 M9 8 V17" stroke="#1d4f7a" stroke-width="0.9" fill="none"/><path d="M2 5 L9 2 L16 5 L9 8 Z" fill="#8cc8ee"/></svg>
<svg class="a" style="left:43px;top:381px;" width="16" height="19" viewBox="0 0 16 19"><path d="M2 5 L14 2 V15 L2 18 Z" fill="#4a9ad4" stroke="#1d4f7a" stroke-width="0.9"/><path d="M8 1 V19" stroke="#111" stroke-width="1.2" stroke-dasharray="3 2"/></svg>
<svg class="a" style="left:75px;top:432px;" width="16" height="16" viewBox="0 0 16 16"><circle cx="8" cy="8" r="7" fill="#fff" stroke="#333" stroke-width="1.1"/></svg>
<svg class="a" style="left:75px;top:466px;" width="16" height="16" viewBox="0 0 16 16"><circle cx="8" cy="8" r="7" fill="#fff" stroke="#333" stroke-width="1.1"/><circle cx="8" cy="8" r="4.2" fill="#333"/></svg>
<svg class="a" style="left:75px;top:490px;" width="16" height="16" viewBox="0 0 16 16"><circle cx="8" cy="8" r="7" fill="#fff" stroke="#333" stroke-width="1.1"/></svg>
<div class="t" style="left:94px;top:425px;font-size:13px;color:#1a1a1a;font-weight:normal;">Create intersecting</div>
<div class="t" style="left:94px;top:442px;font-size:13px;color:#1a1a1a;font-weight:normal;">regions</div>
<div class="t" style="left:94px;top:467px;font-size:13px;color:#1a1a1a;font-weight:normal;">Create internal regions</div>
<div class="t" style="left:94px;top:491px;font-size:13px;color:#1a1a1a;font-weight:normal;">Create both</div>
<div class="a" style="left:75px;top:526px;width:16px;height:16px;background:#fff;border:1px solid #333"></div>
<div class="t" style="left:94px;top:519px;font-size:13px;color:#1a1a1a;font-weight:normal;">Cap planar openings</div>
<div class="t" style="left:94px;top:536px;font-size:13px;color:#1a1a1a;font-weight:normal;">on surfaces</div>
<div class="a" style="left:80px;top:562px;width:121px;height:28px;background:#cccccc;border:1px solid #bdbdbd"></div>
<div class="t" style="left:80px;width:121px;text-align:center;top:566px;font-size:13px;color:#8a8a8a">Intersect</div>
<div class="a" style="left:32px;top:601px;width:201px;height:1px;background:#b8b8b8;"></div>
<div class="t" style="left:36px;top:611px;font-size:13px;color:#333;font-weight:bold;">Regions to Exclude</div>
<svg class="a" style="left:218px;top:612px;" width="12" height="8" viewBox="0 0 12 8"><path d="M1 7 L6 2 L11 7" stroke="#555" stroke-width="1.5" fill="none"/></svg>
<div class="t" style="left:36px;top:635px;font-size:13px;color:#1a1a1a;font-weight:normal;">Preview options</div>
<div class="a" style="left:79px;top:659px;width:30px;height:30px;background:#a9a9a9;border:1px solid #7a7a7a"></div>
<div class="a" style="left:114px;top:659px;width:30px;height:30px;background:#f7f8f8;border:1px solid #9a9a9a"></div>
<div class="a" style="left:149px;top:659px;width:30px;height:30px;background:#f7f8f8;border:1px solid #9a9a9a"></div>
<svg class="a" style="left:80px;top:660px;" width="28" height="28" viewBox="0 0 28 28"><path d="M9 3 H14 V8 H19 V13 H14 V18 H9 V13 H4 V8 H9 Z" fill="#4a9ad4" stroke="#1d4f7a" stroke-width="1"/><ellipse cx="18" cy="21" rx="4.5" ry="2.8" fill="#fff" stroke="#222" stroke-width="0.9"/><circle cx="18" cy="21" r="1.6" fill="#222"/></svg>
<svg class="a" style="left:115px;top:660px;" width="28" height="28" viewBox="0 0 28 28"><circle cx="12" cy="13" r="7" fill="none" stroke="#222" stroke-width="2.6"/><path d="M7 8 L17 18" stroke="#222" stroke-width="2.6"/><ellipse cx="18" cy="21" rx="4.5" ry="2.8" fill="#fff" stroke="#222" stroke-width="0.9"/><circle cx="18" cy="21" r="1.6" fill="#222"/></svg>
<svg class="a" style="left:150px;top:660px;" width="28" height="28" viewBox="0 0 28 28"><circle cx="10" cy="11" r="4.5" fill="none" stroke="#222" stroke-width="2"/><path d="M7 8 L13 14" stroke="#222" stroke-width="2"/><path d="M17 4 H20 V8 H24 V11 H20 V15 H17 V11 H13 V8 H17 Z" fill="#4a9ad4" stroke="#1d4f7a" stroke-width="0.8"/><ellipse cx="18" cy="21" rx="4.5" ry="2.8" fill="#fff" stroke="#222" stroke-width="0.9"/><circle cx="18" cy="21" r="1.6" fill="#222"/></svg>
<div class="a" style="left:37px;top:698px;width:178px;height:252px;background:#ababab;"></div>
<div class="a" style="left:37px;top:698px;width:178px;height:34px;background:#ececec;border:1px solid #333;border-right:1px dotted #333;border-top:2px solid #555"></div>
<div class="a" style="left:67px;top:731px;width:148px;height:0;border-top:1px dotted #222"></div>
<div class="a" style="left:37px;top:731px;width:178px;height:31px;background:#fff;border:1px solid #555;border-top:none"></div>
<div class="a" style="left:37px;top:731px;width:31px;height:31px;background:#ececec;"></div>
<div class="a" style="left:67px;top:698px;width:1px;height:64px;background:#222;"></div>
<div class="a" style="left:37px;top:761px;width:178px;height:1px;background:#555;"></div>
<div class="a" style="left:37px;top:698px;width:1px;height:64px;background:#333;"></div>
<div class="a" style="left:37px;top:731px;width:31px;height:1px;background:#222;"></div>
<div class="a" style="left:37px;top:762px;width:1px;height:188px;background:#777;"></div>
<div class="a" style="left:68px;top:731px;width:147px;height:0;border-top:1px dotted #111"></div>
<svg class="a" style="left:43px;top:706px;" width="18" height="18" viewBox="0 0 18 18"><circle cx="9" cy="9" r="7.5" fill="#e02828" stroke="#8a1010" stroke-width="1"/><circle cx="9" cy="9" r="4.5" fill="none" stroke="#fff" stroke-width="1.6"/><path d="M6 12 L12 6" stroke="#fff" stroke-width="1.8"/></svg>
<div class="a" style="left:48px;top:741px;width:9px;height:9px;background:#fff;"></div>
<div class="t" style="left:68px;width:147px;text-align:center;top:708px;font-size:13px;color:#1a1a1a">Region List</div>
<div class="t" style="left:68px;width:147px;text-align:center;top:739px;font-size:13px;color:#1a1a1a;word-spacing:8px">Region 1</div>
<div class="a" style="left:259px;top:147px;width:1px;height:825px;background:#8c8c8c;"></div>
<div class="a" style="left:260px;top:151px;width:19px;height:21px;background:#ededed;"></div>
<svg class="a" style="left:265px;top:158px;" width="10" height="7" viewBox="0 0 10 7"><path d="M1 6 L5 1.5 L9 6" stroke="#555" stroke-width="1.6" fill="none"/></svg>
<div class="a" style="left:260px;top:172px;width:19px;height:638px;background:#cdcdcd;"></div>
<div class="a" style="left:260px;top:810px;width:19px;height:137px;background:#ededed;"></div>
<svg class="a" style="left:265px;top:932px;" width="10" height="7" viewBox="0 0 10 7"><path d="M1 1 L5 5.5 L9 1" stroke="#555" stroke-width="1.6" fill="none"/></svg>
<div class="a" style="left:259px;top:511px;width:12px;height:49px;background:#f7f8f8;border:1px solid #8c8c8c;border-left:none"></div>
<svg class="a" style="left:260px;top:531px;" width="8" height="8" viewBox="0 0 8 8"><circle cx="4" cy="4" r="3" fill="#d8d8d8" stroke="#9a9a9a" stroke-width="0.8"/></svg>
<svg class="a" style="left:283px;top:161px;" width="10" height="7" viewBox="0 0 10 7"><path d="M0.5 1 H9.5 L5 6 Z" fill="#222"/></svg>
<svg class="a" style="left:304px;top:154px;" width="21" height="21" viewBox="0 0 21 21"><g transform="translate(0 0) scale(1.25)" stroke="#6b5000" stroke-width="0.8" stroke-linejoin="round"><path d="M2 12 L10 16 L10 12 L6 10 L6 6 L2 4 Z" fill="#f0c020"/><path d="M10 16 L14 14 L14 10 L10 12 Z" fill="#d0a010"/><path d="M6 10 L10 12 L14 10 L10 8 Z" fill="#f8e070"/><path d="M6 10 L10 8 L10 4 L6 6 Z" fill="#d0a010"/><path d="M2 4 L6 6 L10 4 L6 2 Z" fill="#f8e070"/></g></svg>
<div class="t" style="left:326px;top:159px;font-size:14.4px;color:#111;font-weight:normal;">Bottle (Default) ...</div>
<svg class="a" style="left:309px;top:183px;" width="7" height="10" viewBox="0 0 7 10"><path d="M1 0.5 V9.5 L6 5 Z" fill="#222"/></svg>
<svg class="a" style="left:326px;top:179px;" width="19" height="18" viewBox="0 0 19 18"><path d="M1 3 Q1 1 3 1 H7 L9 3 H17 Q18 3 18 5 V16 Q18 17 17 17 H2 Q1 17 1 16 Z" fill="#e8e8e8" stroke="#333" stroke-width="1"/><path d="M1 5 H18" stroke="#333" stroke-width="0.8"/><path d="M5 12 A5 5 0 1 0 7 8" stroke="#2a7ad0" stroke-width="2" fill="none"/><circle cx="11" cy="11" r="4" fill="#fff" stroke="#222"/><path d="M11 9 V11 L13 12" stroke="#222" fill="none"/></svg>
<div class="t" style="left:349px;top:183px;font-size:14.4px;color:#111;font-weight:normal;">History</div>
<svg class="a" style="left:326px;top:203px;" width="19" height="18" viewBox="0 0 19 18"><path d="M1 3 Q1 1 3 1 H7 L9 3 H17 Q18 3 18 5 V16 Q18 17 17 17 H2 Q1 17 1 16 Z" fill="#e8e8e8" stroke="#333" stroke-width="1"/><path d="M1 5 H18" stroke="#333" stroke-width="0.8"/><circle cx="10" cy="11" r="4.5" fill="#fff" stroke="#222"/><path d="M10 11 L13 8" stroke="#2a6aa6" stroke-width="1.2"/><path d="M11 15 L14 12" stroke="#d02020" stroke-width="2"/></svg>
<div class="t" style="left:349px;top:207px;font-size:14.4px;color:#111;font-weight:normal;">Sensors</div>
<svg class="a" style="left:309px;top:231px;" width="7" height="10" viewBox="0 0 7 10"><path d="M1 0.5 V9.5 L6 5 Z" fill="#222"/></svg>
<svg class="a" style="left:326px;top:227px;" width="19" height="18" viewBox="0 0 19 18"><path d="M1 3 Q1 1 3 1 H7 L9 3 H17 Q18 3 18 5 V16 Q18 17 17 17 H2 Q1 17 1 16 Z" fill="#e8e8e8" stroke="#333" stroke-width="1"/><path d="M1 5 H18" stroke="#333" stroke-width="0.8"/><text x="10" y="15" font-size="11" font-weight="bold" text-anchor="middle" fill="#1d5a9a" font-family="Liberation Serif">A</text></svg>
<div class="t" style="left:349px;top:231px;font-size:14.4px;color:#111;font-weight:normal;">Annotations</div>
<svg class="a" style="left:306px;top:258px;" width="10" height="7" viewBox="0 0 10 7"><path d="M0.5 1 H9.5 L5 6 Z" fill="#222"/></svg>
<svg class="a" style="left:326px;top:251px;" width="19" height="18" viewBox="0 0 19 18"><path d="M1 3 Q1 1 3 1 H7 L9 3 H17 Q18 3 18 5 V16 Q18 17 17 17 H2 Q1 17 1 16 Z" fill="#e8e8e8" stroke="#333" stroke-width="1"/><path d="M1 5 H18" stroke="#333" stroke-width="0.8"/><path d="M6 9 L10 7 L14 9 V14 L10 16 L6 14 Z" fill="#4a9ad4" stroke="#1d4f7a" stroke-width="0.8"/></svg>
<div class="t" style="left:349px;top:255px;font-size:14.4px;color:#111;font-weight:normal;">Solid Bodies(2)</div>
<svg class="a" style="left:350px;top:276px;" width="18" height="17" viewBox="0 0 18 17"><path d="M1 4 L8 1 L16 3 V12 L9 16 L1 13 Z" fill="#4a9ad4" stroke="#1d4f7a" stroke-width="0.9"/><path d="M1 4 L9 6 L16 3 M9 6 V16" stroke="#1d4f7a" fill="none"/><path d="M1 4 L8 1 L16 3 L9 6 Z" fill="#9bd0f0"/></svg>
<div class="t" style="left:371px;top:279px;font-size:14.4px;color:#111;font-weight:normal;">Fillet11</div>
<div class="a" style="left:346px;top:297px;width:104px;height:23px;background:#eef4fb;border:1px solid #5a9ad8"></div>
<svg class="a" style="left:350px;top:300px;" width="18" height="17" viewBox="0 0 18 17"><path d="M1 4 L8 1 L16 3 V12 L9 16 L1 13 Z" fill="#4a9ad4" stroke="#1d4f7a" stroke-width="0.9"/><path d="M1 4 L9 6 L16 3 M9 6 V16" stroke="#1d4f7a" fill="none"/><path d="M1 4 L8 1 L16 3 L9 6 Z" fill="#9bd0f0"/></svg>
<div class="t" style="left:371px;top:303px;font-size:14.4px;color:#111;font-weight:normal;">DeleteFac...</div>
<svg class="a" style="left:327px;top:323px;" width="22" height="20" viewBox="0 0 22 20"><circle cx="3" cy="3" r="2" fill="none" stroke="#555"/><path d="M7 3 H19" stroke="#222" stroke-width="1.5"/><circle cx="3" cy="9" r="2" fill="#5aaee0" stroke="#555"/><path d="M7 9 H19" stroke="#222" stroke-width="1.5"/><circle cx="3" cy="15" r="2" fill="#f0a020" stroke="#555"/><path d="M7 15 H12" stroke="#222" stroke-width="1.5"/><circle cx="16" cy="15" r="3.2" fill="#222"/><circle cx="16" cy="15" r="1.2" fill="#fff"/></svg>
<div class="t" style="left:349px;top:327px;font-size:14.4px;color:#111;font-weight:normal;">Material &lt;not...</div>
<svg class="a" style="left:327px;top:347px;" width="18" height="19" viewBox="0 0 18 19"><path d="M3 4 L14 1 V14 L3 17 Z" fill="#fff" stroke="#444" stroke-width="1"/><path d="M8.5 1 V18" stroke="#333" stroke-dasharray="2.5 1.5"/></svg>
<div class="t" style="left:349px;top:351px;font-size:14.4px;color:#111;font-weight:normal;">Front Plane</div>
<svg class="a" style="left:327px;top:371px;" width="18" height="19" viewBox="0 0 18 19"><path d="M3 4 L14 1 V14 L3 17 Z" fill="#fff" stroke="#444" stroke-width="1"/><path d="M8.5 1 V18" stroke="#333" stroke-dasharray="2.5 1.5"/></svg>
<div class="t" style="left:349px;top:375px;font-size:14.4px;color:#111;font-weight:normal;">Top Plane</div>
<svg class="a" style="left:327px;top:395px;" width="18" height="19" viewBox="0 0 18 19"><path d="M3 4 L14 1 V14 L3 17 Z" fill="#fff" stroke="#444" stroke-width="1"/><path d="M8.5 1 V18" stroke="#333" stroke-dasharray="2.5 1.5"/></svg>
<div class="t" style="left:349px;top:399px;font-size:14.4px;color:#111;font-weight:normal;">Right Plane</div>
<svg class="a" style="left:329px;top:419px;" width="20" height="20" viewBox="0 0 20 20"><path d="M3 2 V17 H17" stroke="#111" stroke-width="1.6" fill="none"/><path d="M1 4 L3 1 L5 4 M15 15 L18 17 L15 19" stroke="#111" stroke-width="1.3" fill="none"/></svg>
<div class="t" style="left:349px;top:423px;font-size:14.4px;color:#111;font-weight:normal;">Origin</div>
<svg class="a" style="left:309px;top:447px;" width="7" height="10" viewBox="0 0 7 10"><path d="M1 0.5 V9.5 L6 5 Z" fill="#222"/></svg>
<svg class="a" style="left:328px;top:443px;" width="19" height="19" viewBox="0 0 19 19"><path d="M9 1 A8.5 8.5 0 1 1 2 14 L6 11 A4 4 0 1 0 7 5 Z" fill="#4a9ad4" stroke="#1d4f7a" stroke-width="0.9"/><path d="M4 6 L13 11" stroke="#1a1a1a" stroke-width="1.3"/></svg>
<div class="t" style="left:349px;top:447px;font-size:14.4px;color:#111;font-weight:normal;">Revolve1</div>
<svg class="a" style="left:328px;top:467px;" width="19" height="19" viewBox="0 0 19 19"><path d="M2 6 Q5 2 11 2 L17 4 V13 L8 17 L2 14 Z" fill="#e6e6e6" stroke="#444" stroke-width="1"/><path d="M2 6 L8 8 L17 4 M8 8 V17" stroke="#444" fill="none"/><path d="M2 6 Q5 2 11 2 L17 4 L8 8 Z" fill="#4a9ad4"/></svg>
<div class="t" style="left:349px;top:471px;font-size:14.4px;color:#111;font-weight:normal;">Fillet1</div>
<svg class="a" style="left:328px;top:491px;" width="19" height="19" viewBox="0 0 19 19"><path d="M2 6 Q5 2 11 2 L17 4 V13 L8 17 L2 14 Z" fill="#e6e6e6" stroke="#444" stroke-width="1"/><path d="M2 6 L8 8 L17 4 M8 8 V17" stroke="#444" fill="none"/><path d="M2 6 Q5 2 11 2 L17 4 L8 8 Z" fill="#4a9ad4"/></svg>
<div class="t" style="left:349px;top:495px;font-size:14.4px;color:#111;font-weight:normal;">Fillet2</div>
<svg class="a" style="left:328px;top:515px;" width="19" height="19" viewBox="0 0 19 19"><path d="M2 6 Q5 2 11 2 L17 4 V13 L8 17 L2 14 Z" fill="#e6e6e6" stroke="#444" stroke-width="1"/><path d="M2 6 L8 8 L17 4 M8 8 V17" stroke="#444" fill="none"/><path d="M2 6 Q5 2 11 2 L17 4 L8 8 Z" fill="#4a9ad4"/></svg>
<div class="t" style="left:349px;top:519px;font-size:14.4px;color:#111;font-weight:normal;">Fillet3</div>
<svg class="a" style="left:309px;top:543px;" width="7" height="10" viewBox="0 0 7 10"><path d="M1 0.5 V9.5 L6 5 Z" fill="#222"/></svg>
<svg class="a" style="left:328px;top:539px;" width="19" height="19" viewBox="0 0 19 19"><path d="M1 5 Q1 1 9 1 Q17 1 17 5 V17 H1 Z" fill="#f0f0f0" stroke="#333"/><path d="M1 5 H17" stroke="#333"/><path d="M6 7 H12 M6 9.5 H12 M6 12 H12 M7 14.5 H11" stroke="#1d5a9a" stroke-width="1.6"/></svg>
<div class="t" style="left:349px;top:543px;font-size:14.4px;color:#111;font-weight:normal;">Thread2</div>
<svg class="a" style="left:309px;top:567px;" width="7" height="10" viewBox="0 0 7 10"><path d="M1 0.5 V9.5 L6 5 Z" fill="#222"/></svg>
<svg class="a" style="left:328px;top:563px;" width="19" height="19" viewBox="0 0 19 19"><path d="M9 1 A8.5 8.5 0 1 1 2 14 L6 11 A4 4 0 1 0 7 5 Z" fill="#4a9ad4" stroke="#1d4f7a" stroke-width="0.9"/><path d="M4 6 L13 11" stroke="#1a1a1a" stroke-width="1.3"/></svg>
<div class="t" style="left:349px;top:567px;font-size:14.4px;color:#111;font-weight:normal;">Revolve2</div>
<svg class="a" style="left:309px;top:591px;" width="7" height="10" viewBox="0 0 7 10"><path d="M1 0.5 V9.5 L6 5 Z" fill="#222"/></svg>
<svg class="a" style="left:328px;top:587px;" width="19" height="19" viewBox="0 0 19 19"><path d="M9 1 A8.5 8.5 0 1 1 2 14 L6 11 A4 4 0 1 0 7 5 Z" fill="#4a9ad4" stroke="#1d4f7a" stroke-width="0.9"/><path d="M4 6 L13 11" stroke="#1a1a1a" stroke-width="1.3"/></svg>
<div class="t" style="left:349px;top:591px;font-size:14.4px;color:#111;font-weight:normal;">Revolve3</div>
<svg class="a" style="left:309px;top:615px;" width="7" height="10" viewBox="0 0 7 10"><path d="M1 0.5 V9.5 L6 5 Z" fill="#222"/></svg>
<svg class="a" style="left:327px;top:611px;" width="20" height="19" viewBox="0 0 20 19"><path d="M1 7 L7 4 L12 6 V14 L6 17 L1 15 Z" fill="#4a9ad4" stroke="#1d4f7a" stroke-width="0.9"/><path d="M8 4 L12 1 H18 V14 L14 17 H12" fill="#eeeeee" stroke="#444" stroke-width="0.9"/><path d="M12 4 V17 M14 4 V17" stroke="#444" stroke-width="0.7"/></svg>
<div class="t" style="left:349px;top:615px;font-size:14.4px;color:#111;font-weight:normal;">Boss-Extrude1</div>
<svg class="a" style="left:328px;top:635px;" width="19" height="19" viewBox="0 0 19 19"><path d="M2 6 Q5 2 11 2 L17 4 V13 L8 17 L2 14 Z" fill="#e6e6e6" stroke="#444" stroke-width="1"/><path d="M2 6 L8 8 L17 4 M8 8 V17" stroke="#444" fill="none"/><path d="M2 6 Q5 2 11 2 L17 4 L8 8 Z" fill="#4a9ad4"/></svg>
<div class="t" style="left:349px;top:639px;font-size:14.4px;color:#111;font-weight:normal;">Fillet5</div>
<svg class="a" style="left:328px;top:659px;" width="19" height="19" viewBox="0 0 19 19"><path d="M1 6 L6 4 L10 6 V15 L5 17 L1 15 Z" fill="#4a9ad4" stroke="#1d4f7a" stroke-width="0.9"/><path d="M7 3 L12 1 L17 3 V11 L12 13 L7 11 Z" fill="#4a9ad4" stroke="#1d4f7a" stroke-width="0.9"/></svg>
<div class="t" style="left:349px;top:663px;font-size:14.4px;color:#111;font-weight:normal;">Combine1</div>
<svg class="a" style="left:328px;top:683px;" width="19" height="19" viewBox="0 0 19 19"><path d="M2 6 Q5 2 11 2 L17 4 V13 L8 17 L2 14 Z" fill="#e6e6e6" stroke="#444" stroke-width="1"/><path d="M2 6 L8 8 L17 4 M8 8 V17" stroke="#444" fill="none"/><path d="M2 6 Q5 2 11 2 L17 4 L8 8 Z" fill="#4a9ad4"/></svg>
<div class="t" style="left:349px;top:687px;font-size:14.4px;color:#111;font-weight:normal;">Fillet6</div>
<svg class="a" style="left:328px;top:707px;" width="19" height="19" viewBox="0 0 19 19"><path d="M2 4 L10 1 L17 4 V9 L10 12 L2 9 Z" fill="#e8e8e8" stroke="#333" stroke-width="0.9"/><path d="M1 10 Q9 8 17 11 L17 14 Q9 11 1 13 Z" fill="#4a9ad4" stroke="#1d4f7a" stroke-width="0.8"/><path d="M2 13 L10 16 L17 14 V17 L10 19 L2 16 Z" fill="#4a9ad4" stroke="#1d4f7a" stroke-width="0.8"/></svg>
<div class="t" style="left:349px;top:711px;font-size:14.4px;color:#111;font-weight:normal;">SurfaceCut1</div>
<svg class="a" style="left:328px;top:731px;" width="20" height="19" viewBox="0 0 20 19"><path d="M1 6 L4 4 V17 H1 Z M4 4 H7 V17 H4" fill="#4a9ad4" stroke="#1d4f7a" stroke-width="0.9"/><path d="M10 1 V19" stroke="#222" stroke-width="1.2"/><path d="M13 6 L16 4 H19 V17 H13 Z" fill="#f0f0f0" stroke="#444" stroke-width="0.9"/></svg>
<div class="t" style="left:349px;top:735px;font-size:14.4px;color:#111;font-weight:normal;">Mirror3</div>
<svg class="a" style="left:328px;top:755px;" width="19" height="19" viewBox="0 0 19 19"><path d="M1 4 L8 1 L17 3 V14 L9 18 L1 15 Z" fill="#e8e8e8" stroke="#333" stroke-width="0.9"/><path d="M5 6 L12 4 V14 L5 16 Z" fill="#4a9ad4" stroke="#1d4f7a" stroke-width="0.8"/></svg>
<div class="t" style="left:349px;top:759px;font-size:14.4px;color:#111;font-weight:normal;">Shell2</div>
<svg class="a" style="left:309px;top:783px;" width="7" height="10" viewBox="0 0 7 10"><path d="M1 0.5 V9.5 L6 5 Z" fill="#222"/></svg>
<svg class="a" style="left:327px;top:779px;" width="20" height="19" viewBox="0 0 20 19"><path d="M1 7 L7 4 L12 6 V14 L6 17 L1 15 Z" fill="#4a9ad4" stroke="#1d4f7a" stroke-width="0.9"/><path d="M8 4 L12 1 H18 V14 L14 17 H12" fill="#eeeeee" stroke="#444" stroke-width="0.9"/><path d="M12 4 V17 M14 4 V17" stroke="#444" stroke-width="0.7"/></svg>
<div class="t" style="left:349px;top:783px;font-size:14.4px;color:#111;font-weight:normal;">Boss-Extrude2</div>
<svg class="a" style="left:327px;top:803px;" width="18" height="19" viewBox="0 0 18 19"><path d="M3 4 L14 1 V14 L3 17 Z" fill="#fff" stroke="#444" stroke-width="1"/><path d="M8.5 1 V18" stroke="#333" stroke-dasharray="2.5 1.5"/></svg>
<div class="t" style="left:349px;top:807px;font-size:14.4px;color:#111;font-weight:normal;">Plane3</div>
<svg class="a" style="left:327px;top:826px;" width="20" height="20" viewBox="0 0 20 20"><path d="M3 2 H16 M3 2 V12 Q3 18 9 18 H19" stroke="#333" stroke-width="1.1" fill="none"/></svg>
<div class="t" style="left:349px;top:831px;font-size:14.4px;color:#111;font-weight:normal;">Sketch18</div>
<svg class="a" style="left:327px;top:851px;" width="18" height="19" viewBox="0 0 18 19"><path d="M3 4 L14 1 V14 L3 17 Z" fill="#fff" stroke="#444" stroke-width="1"/><path d="M8.5 1 V18" stroke="#333" stroke-dasharray="2.5 1.5"/></svg>
<div class="t" style="left:349px;top:855px;font-size:14.4px;color:#111;font-weight:normal;">Plane4</div>
<svg class="a" style="left:327px;top:874px;" width="20" height="20" viewBox="0 0 20 20"><path d="M3 2 H16 M3 2 V12 Q3 18 9 18 H19" stroke="#333" stroke-width="1.1" fill="none"/></svg>
<div class="t" style="left:349px;top:879px;font-size:14.4px;color:#111;font-weight:normal;">(-) Sketch19</div>
<svg class="a" style="left:327px;top:899px;" width="18" height="19" viewBox="0 0 18 19"><path d="M3 4 L14 1 V14 L3 17 Z" fill="#fff" stroke="#444" stroke-width="1"/><path d="M8.5 1 V18" stroke="#333" stroke-dasharray="2.5 1.5"/></svg>
<div class="t" style="left:349px;top:903px;font-size:14.4px;color:#111;font-weight:normal;">Plane5</div>
<svg class="a" style="left:309px;top:927px;" width="7" height="10" viewBox="0 0 7 10"><path d="M1 0.5 V9.5 L6 5 Z" fill="#222"/></svg>
<svg class="a" style="left:328px;top:923px;" width="20" height="19" viewBox="0 0 20 19"><path d="M4 16 C2 10 10 12 11 7 C12 2 17 2 18 5" stroke="#1d4f7a" stroke-width="6" fill="none" stroke-linecap="round"/><path d="M4 16 C2 10 10 12 11 7 C12 2 17 2 18 5" stroke="#4a9ad4" stroke-width="4.2" fill="none" stroke-linecap="round"/><ellipse cx="17.5" cy="4.5" rx="2.5" ry="2" fill="#9bd0f0" stroke="#1d4f7a" stroke-width="0.8"/></svg>
<div class="t" style="left:349px;top:927px;font-size:14.4px;color:#111;font-weight:normal;">Sweep1</div>
<div class="a" style="left:326px;top:945px;width:20px;height:5px;overflow:hidden"><svg width="20" height="19" viewBox="0 0 20 19"><path d="M1 6 Q5 1 11 1 L18 4 V14 L9 18 L1 15 Z" fill="#e6e6e6" stroke="#444"/></svg></div>
<svg class="a" style="left:737px;top:153px;" width="20" height="19" viewBox="0 0 20 19"><circle cx="12" cy="7" r="6" fill="#f4f4f4" stroke="#777" stroke-width="1.2"/><path d="M7.5 11.5 L2 17" stroke="#4a8fc0" stroke-width="3" stroke-linecap="round"/><path d="M12 3 L10.5 5 H13.5 Z M12 11 L10.5 9 H13.5 Z M8 7 L10 5.5 V8.5 Z M16 7 L14 5.5 V8.5 Z" fill="#444"/></svg>
<svg class="a" style="left:763px;top:153px;" width="20" height="19" viewBox="0 0 20 19"><circle cx="12" cy="7" r="6" fill="#f4f4f4" stroke="#777" stroke-width="1.2"/><path d="M7.5 11.5 L2 17" stroke="#4a8fc0" stroke-width="3" stroke-linecap="round"/><rect x="7" y="1" width="11" height="11" fill="none" stroke="#333" stroke-dasharray="2 1.5"/></svg>
<svg class="a" style="left:790px;top:153px;" width="20" height="19" viewBox="0 0 20 19"><path d="M3 13 L13 3 L17 6 L7 16 Z" fill="#d8d8d8" stroke="#666"/><ellipse cx="5" cy="14.5" rx="3" ry="2.5" fill="#bbb" stroke="#555"/><path d="M11 15 H18 M11 15 L14 12 M11 15 L14 18" stroke="#3a88c8" stroke-width="2.4" fill="none"/></svg>
<svg class="a" style="left:816px;top:153px;" width="19" height="19" viewBox="0 0 19 19"><path d="M2 5 Q9 0 17 5 V15 Q9 19 2 15 Z" fill="#ececec" stroke="#d8d8d8"/><path d="M9 6 V17" stroke="#d6d6d6" stroke-width="2"/></svg>
<svg class="a" style="left:841px;top:152px;" width="21" height="20" viewBox="0 0 21 20"><path d="M4 8 L12 1 L10 6 L15 6 L6 13 Z" fill="#f0a030"/><path d="M3 15 L13 5 L17 8 L7 18 Z" fill="#d8d8d8" stroke="#666"/><ellipse cx="5" cy="16" rx="3" ry="2.5" fill="#bbb" stroke="#555"/><text x="15" y="19" font-size="11" font-weight="bold" fill="#3a78b0" font-family="Liberation Serif">A</text></svg>
<svg class="a" style="left:868px;top:152px;" width="19" height="20" viewBox="0 0 19 20"><path d="M1 5 L5 1 H18 V15 L14 19 H1 Z" fill="#fff" stroke="#444"/><rect x="1" y="5" width="13" height="14" fill="#7ab8e0" stroke="#2a5a80"/><path d="M14 5 L18 1 M9 1 V4 M16 9 V13" stroke="#444"/></svg>
<svg class="a" style="left:892px;top:160px;" width="8" height="5" viewBox="0 0 8 5"><path d="M0 0 H7 L3.5 4 Z" fill="#8a8aa0"/></svg>
<svg class="a" style="left:909px;top:152px;" width="18" height="19" viewBox="0 0 18 19"><path d="M1 4 L7 1 L17 3 V15 L11 18 L1 16 Z" fill="#fff" stroke="#555"/><path d="M1 4 L11 6 V18 L1 16 Z" fill="#6aaedc" stroke="#2a5a80"/><path d="M11 6 L17 3" stroke="#555"/></svg>
<svg class="a" style="left:932px;top:160px;" width="8" height="5" viewBox="0 0 8 5"><path d="M0 0 H7 L3.5 4 Z" fill="#8a8aa0"/></svg>
<svg class="a" style="left:947px;top:155px;" width="20" height="14" viewBox="0 0 20 14"><path d="M1 7 Q10 -1 19 7 Q10 15 1 7 Z" fill="#f4f4f4" stroke="#888"/><circle cx="10" cy="7" r="4.5" fill="#777"/><path d="M10 0 V14" stroke="#333" stroke-width="1.4"/></svg>
<svg class="a" style="left:972px;top:160px;" width="8" height="5" viewBox="0 0 8 5"><path d="M0 0 H7 L3.5 4 Z" fill="#8a8aa0"/></svg>
<svg class="a" style="left:988px;top:152px;" width="20" height="21" viewBox="0 0 20 21"><circle cx="9" cy="8" r="7.5" fill="#e6e6e6"/><path d="M10 19 L18 10 L20 12 L12 21 Z" fill="#e0e0e0" stroke="#d0d0d0"/></svg>
<svg class="a" style="left:1013px;top:152px;" width="20" height="21" viewBox="0 0 20 21"><circle cx="10" cy="8" r="7.5" fill="#e6e6e6"/><rect x="1" y="12" width="18" height="8" fill="#e0e0e0"/><path d="M3 17 H7 M12 17 H16" stroke="#fff" stroke-width="2"/></svg>
<svg class="a" style="left:1038px;top:160px;" width="8" height="5" viewBox="0 0 8 5"><path d="M0 0 H7 L3.5 4 Z" fill="#8a8aa0"/></svg>
<svg class="a" style="left:1054px;top:153px;" width="19" height="18" viewBox="0 0 19 18"><rect x="1" y="1" width="17" height="12" fill="#e8e8e8" stroke="#555" stroke-width="1.3"/><path d="M9.5 13 V16 M5 16.5 H14" stroke="#444" stroke-width="1.6"/></svg>
<svg class="a" style="left:1078px;top:160px;" width="8" height="5" viewBox="0 0 8 5"><path d="M0 0 H7 L3.5 4 Z" fill="#8a8aa0"/></svg>
<div class="a" style="left:0px;top:950px;width:259px;height:55px;background:#f7f8f8;"></div>
<div class="a" style="left:259px;top:952px;width:1122px;height:53px;background:#f6f7f7;"></div>
<div class="a" style="left:37px;top:950px;width:178px;height:1px;background:#ababab;"></div>
<div class="a" style="left:213px;top:952px;width:1168px;height:1px;background:#8c8c8c;"></div>
<div class="a" style="left:30px;top:953px;width:2px;height:19px;background:#8ab8b0;"></div>
<div class="a" style="left:56px;top:952px;width:81px;height:20px;background:#a6a8c4;border-top:1px solid #111"></div>
<div class="a" style="left:57px;top:953px;width:19px;height:19px;border:1px solid #8a8ca8;border-top:none"></div>
<div class="a" style="left:77px;top:953px;width:19px;height:19px;border:1px solid #8a8ca8;border-top:none"></div>
<div class="a" style="left:97px;top:953px;width:19px;height:19px;border:1px solid #8a8ca8;border-top:none"></div>
<div class="a" style="left:117px;top:953px;width:19px;height:19px;border:1px solid #8a8ca8;border-top:none"></div>
<svg class="a" style="left:62px;top:955px;" width="12" height="14" viewBox="0 0 12 14"><path d="M2 2 V12" stroke="#7a7c98" stroke-width="1.6"/><path d="M10 1 V13 L3 7 Z" fill="#7a7c98"/></svg>
<svg class="a" style="left:82px;top:955px;" width="12" height="14" viewBox="0 0 12 14"><path d="M9 1 V13 L2 7 Z" fill="#7a7c98"/></svg>
<svg class="a" style="left:102px;top:955px;" width="12" height="14" viewBox="0 0 12 14"><path d="M3 1 V13 L10 7 Z" fill="#7a7c98"/></svg>
<svg class="a" style="left:121px;top:955px;" width="12" height="14" viewBox="0 0 12 14"><path d="M10 2 V12" stroke="#7a7c98" stroke-width="1.6"/><path d="M2 1 V13 L9 7 Z" fill="#7a7c98"/></svg>
<div class="t" style="left:152px;top:954px;font-size:17px;color:#111;font-weight:bold;">Model</div>
<div class="a" style="left:213px;top:952px;width:89px;height:20px;background:#d6d6d6;border:1px solid #8c8c8c;border-bottom:none"></div>
<div class="a" style="left:301px;top:952px;width:145px;height:20px;background:#d6d6d6;border:1px solid #8c8c8c;border-bottom:none"></div>
<div class="t" style="left:224px;top:955px;font-size:15px;color:#111;font-weight:normal;">3D Views</div>
<div class="t" style="left:315px;top:955px;font-size:15px;color:#111;font-weight:normal;letter-spacing:0.3px">Motion Study 1</div>
<div class="a" style="left:1px;top:977px;width:3px;height:28px;background:repeating-linear-gradient(180deg,#8a8a8a 0 2px,transparent 2px 4px)"></div>
<svg class="a" style="left:18px;top:983px;" width="14" height="14" viewBox="0 0 14 14"><path d="M1 1 H13 L8 7 V13 H6 V7 Z" fill="#e0e0e0" stroke="#c8c8c8"/></svg>
<svg class="a" style="left:41px;top:980px;" width="22" height="22" viewBox="0 0 22 22"><path d="M1 1 H11 L7 5 V10 H5 V5 Z M4 4 H14 L10 8 V13 H8 V8 Z M7 7 H18 L13 12 V19 H11 V12 Z" fill="#f0f0f0" stroke="#c8c8c8"/></svg>
<svg class="a" style="left:68px;top:980px;" width="22" height="22" viewBox="0 0 22 22"><path d="M1 1 H11 L7 5 V10 H5 V5 Z" fill="#e8a8f0" stroke="#7a1080" stroke-width="1.2"/><path d="M4 4 H14 L10 8 V13 H8 V8 Z" fill="#e8a8f0" stroke="#7a1080" stroke-width="1.2"/><path d="M7 7 H18 L13 12 V19 H11 V12 Z" fill="#e0a0ea" stroke="#7a1080" stroke-width="1.2"/></svg>
<svg class="a" style="left:99px;top:980px;" width="14" height="20" viewBox="0 0 14 20"><path d="M1 1 L12 11 H7 L10 18 L8 19 L5 12 L1 16 Z" fill="#fafafa" stroke="#c8c8c8"/></svg>
<svg class="a" style="left:126px;top:987px;" width="8" height="5" viewBox="0 0 8 5"><path d="M0 0 H7 L3.5 4 Z" fill="#9a9a9a"/></svg>
<svg class="a" style="left:141px;top:980px;" width="22" height="20" viewBox="0 0 22 20"><path d="M1 1 L12 11 H7 L10 18 L8 19 L5 12 L1 16 Z" fill="#f0f0f0" stroke="#c8c8c8"/><path d="M6 1 L17 11 H12 L15 18 L13 19 L10 12 L6 16 Z" fill="#d8d8d8" stroke="#c0c0c0"/></svg>
<div class="a" style="left:167px;top:980px;width:1px;height:23px;background:#777;"></div>
<div class="a" style="left:173px;top:977px;width:28px;height:26px;background:#a8a8a8;border:1px solid #6e6e6e"></div>
<svg class="a" style="left:174px;top:978px;" width="26" height="24" viewBox="0 0 26 24"><circle cx="7" cy="8" r="3" fill="#4a9ad4" stroke="#1d4f7a"/><path d="M14 13 h9 l-3.5 4 v5 h-2 v-5 z" fill="#b040c8" stroke="#7a1a90" stroke-width="0.6"/></svg>
<div class="a" style="left:200px;top:977px;width:28px;height:26px;background:#a8a8a8;border:1px solid #6e6e6e"></div>
<svg class="a" style="left:201px;top:978px;" width="26" height="24" viewBox="0 0 26 24"><path d="M9 2 V20" stroke="#1d4f7a" stroke-width="2.4"/><path d="M9 2 V20" stroke="#4a9ad4" stroke-width="1"/><path d="M14 13 h9 l-3.5 4 v5 h-2 v-5 z" fill="#b040c8" stroke="#7a1a90" stroke-width="0.6"/></svg>
<div class="a" style="left:227px;top:977px;width:28px;height:26px;background:#a8a8a8;border:1px solid #6e6e6e"></div>
<svg class="a" style="left:228px;top:978px;" width="26" height="24" viewBox="0 0 26 24"><rect x="3" y="3" width="14" height="13" fill="#4a9ad4" stroke="#1d4f7a"/><path d="M14 13 h9 l-3.5 4 v5 h-2 v-5 z" fill="#b040c8" stroke="#7a1a90" stroke-width="0.6"/></svg>
<div class="a" style="left:254px;top:977px;width:28px;height:26px;background:#a8a8a8;border:1px solid #6e6e6e"></div>
<svg class="a" style="left:255px;top:978px;" width="26" height="24" viewBox="0 0 26 24"><path d="M2 12 Q4 5 10 7 Q15 9 18 3 L20 10 Q17 15 11 14 Q6 13 6 20 Z" fill="#4a9ad4" stroke="#1d4f7a"/><path d="M14 13 h9 l-3.5 4 v5 h-2 v-5 z" fill="#b040c8" stroke="#7a1a90" stroke-width="0.6"/></svg>
<div class="a" style="left:281px;top:977px;width:28px;height:26px;background:#a8a8a8;border:1px solid #6e6e6e"></div>
<svg class="a" style="left:282px;top:978px;" width="26" height="24" viewBox="0 0 26 24"><path d="M2 6 L9 3 L17 5 V15 L10 19 L2 16 Z" fill="#4a9ad4" stroke="#1d4f7a"/><path d="M2 6 L10 9 L17 5 M10 9 V19" stroke="#1d4f7a" fill="none"/><path d="M14 13 h9 l-3.5 4 v5 h-2 v-5 z" fill="#b040c8" stroke="#7a1a90" stroke-width="0.6"/></svg>
<div class="a" style="left:308px;top:977px;width:28px;height:26px;background:#a8a8a8;border:1px solid #6e6e6e"></div>
<svg class="a" style="left:309px;top:978px;" width="26" height="24" viewBox="0 0 26 24"><path d="M3 19 L18 4" stroke="#1d4f7a" stroke-width="2.2" stroke-dasharray="3 2"/><path d="M14 13 h9 l-3.5 4 v5 h-2 v-5 z" fill="#b040c8" stroke="#7a1a90" stroke-width="0.6"/></svg>
<div class="a" style="left:335px;top:977px;width:28px;height:26px;background:#a8a8a8;border:1px solid #6e6e6e"></div>
<svg class="a" style="left:336px;top:978px;" width="26" height="24" viewBox="0 0 26 24"><path d="M3 6 L15 2 V17 L3 21 Z" fill="#4a9ad4" stroke="#1d4f7a"/><path d="M9 1 V22" stroke="#111" stroke-dasharray="2.5 1.5"/><path d="M14 13 h9 l-3.5 4 v5 h-2 v-5 z" fill="#b040c8" stroke="#7a1a90" stroke-width="0.6"/></svg>
<div class="a" style="left:362px;top:977px;width:28px;height:26px;background:#a8a8a8;border:1px solid #6e6e6e"></div>
<svg class="a" style="left:363px;top:978px;" width="26" height="24" viewBox="0 0 26 24"><rect x="5" y="5" width="7" height="7" fill="#4a9ad4" stroke="#1d4f7a"/><path d="M14 13 h9 l-3.5 4 v5 h-2 v-5 z" fill="#b040c8" stroke="#7a1a90" stroke-width="0.6"/></svg>
<div class="a" style="left:389px;top:977px;width:28px;height:26px;background:#a8a8a8;border:1px solid #6e6e6e"></div>
<svg class="a" style="left:390px;top:978px;" width="26" height="24" viewBox="0 0 26 24"><path d="M3 3 V13 Q3 18 9 18 H18 M3 3 H16" stroke="#1d4f7a" stroke-width="3.2" fill="none"/><path d="M3 3 V13 Q3 18 9 18 H18 M3 3 H16" stroke="#4a9ad4" stroke-width="1.4" fill="none"/><path d="M14 13 h9 l-3.5 4 v5 h-2 v-5 z" fill="#b040c8" stroke="#7a1a90" stroke-width="0.6"/></svg>
<div class="a" style="left:416px;top:977px;width:28px;height:26px;background:#a8a8a8;border:1px solid #6e6e6e"></div>
<svg class="a" style="left:417px;top:978px;" width="26" height="24" viewBox="0 0 26 24"><path d="M5 4 V19 M5 4 H18" stroke="#111" stroke-width="1.6"/><path d="M5 4 H18" stroke="#4a9ad4" stroke-width="1.2"/><rect x="3" y="2" width="4" height="4" fill="#fff" stroke="#111"/><rect x="16" y="2" width="4" height="4" fill="#fff" stroke="#111"/><rect x="3" y="17" width="4" height="4" fill="#fff" stroke="#111"/><path d="M14 13 h9 l-3.5 4 v5 h-2 v-5 z" fill="#b040c8" stroke="#7a1a90" stroke-width="0.6"/></svg>
<svg class="a" style="left:446px;top:980px;" width="22" height="22" viewBox="0 0 22 22"><path d="M2 19 L17 4" stroke="#d0d0d0" stroke-width="1.6"/><circle cx="10" cy="11" r="2" fill="none" stroke="#d0d0d0"/><path d="M13 14 h7 l-3 3 v4 h-1 v-4 z" fill="#e0e0e0"/></svg>
<div class="a" style="left:470px;top:977px;width:28px;height:26px;background:#a8a8a8;border:1px solid #6e6e6e"></div>
<svg class="a" style="left:471px;top:978px;" width="26" height="24" viewBox="0 0 26 24"><circle cx="11" cy="11" r="6" fill="none" stroke="#111" stroke-width="1.4"/><circle cx="11" cy="11" r="2.2" fill="#4a9ad4"/><path d="M11 2 V20 M2 11 H20" stroke="#111" stroke-width="1.2"/><path d="M14 13 h9 l-3.5 4 v5 h-2 v-5 z" fill="#b040c8" stroke="#7a1a90" stroke-width="0.6"/></svg>
<div class="a" style="left:497px;top:977px;width:28px;height:26px;background:#a8a8a8;border:1px solid #6e6e6e"></div>
<svg class="a" style="left:498px;top:978px;" width="26" height="24" viewBox="0 0 26 24"><path d="M4 3 H11 V18 H4 Z" fill="#eee" stroke="#222"/><path d="M11 12 H20" stroke="#222"/><path d="M4 12 H22" stroke="#4a9ad4" stroke-dasharray="2 1.5"/><path d="M14 13 h9 l-3.5 4 v5 h-2 v-5 z" fill="#b040c8" stroke="#7a1a90" stroke-width="0.6"/></svg>
<div class="a" style="left:524px;top:977px;width:28px;height:26px;background:#a8a8a8;border:1px solid #6e6e6e"></div>
<svg class="a" style="left:525px;top:978px;" width="26" height="24" viewBox="0 0 26 24"><path d="M3 9 L11 3 L19 9 L11 15 Z" fill="#eee" stroke="#111" stroke-width="1.3"/><path d="M7 8 L12 12" stroke="#4a9ad4" stroke-width="2"/><path d="M14 13 h9 l-3.5 4 v5 h-2 v-5 z" fill="#b040c8" stroke="#7a1a90" stroke-width="0.6"/></svg>
<div class="a" style="left:551px;top:977px;width:28px;height:26px;background:#a8a8a8;border:1px solid #6e6e6e"></div>
<svg class="a" style="left:552px;top:978px;" width="26" height="24" viewBox="0 0 26 24"><path d="M2 12 L6 18 L12 3 H20" stroke="#111" stroke-width="1.6" fill="none"/><path d="M14 13 h9 l-3.5 4 v5 h-2 v-5 z" fill="#b040c8" stroke="#7a1a90" stroke-width="0.6"/></svg>
<div class="a" style="left:578px;top:977px;width:28px;height:26px;background:#a8a8a8;border:1px solid #6e6e6e"></div>
<svg class="a" style="left:579px;top:978px;" width="26" height="24" viewBox="0 0 26 24"><rect x="2" y="3" width="20" height="10" fill="#fff" stroke="#111"/><rect x="4" y="6" width="6" height="4" fill="none" stroke="#111" rx="2"/><text x="16" y="11" font-size="7" text-anchor="middle" font-family="Liberation Sans">0.3</text><path d="M14 13 h9 l-3.5 4 v5 h-2 v-5 z" fill="#b040c8" stroke="#7a1a90" stroke-width="0.6"/></svg>
<div class="a" style="left:605px;top:977px;width:28px;height:26px;background:#a8a8a8;border:1px solid #6e6e6e"></div>
<svg class="a" style="left:606px;top:978px;" width="26" height="24" viewBox="0 0 26 24"><circle cx="13" cy="9" r="7" fill="#fff" stroke="#111" stroke-width="1.3"/><text x="13" y="12.5" font-size="9" text-anchor="middle" font-family="Liberation Sans">N</text><path d="M8 14 L2 20" stroke="#111" stroke-width="2"/><path d="M14 13 h9 l-3.5 4 v5 h-2 v-5 z" fill="#b040c8" stroke="#7a1a90" stroke-width="0.6"/></svg>
<div class="a" style="left:632px;top:977px;width:28px;height:26px;background:#a8a8a8;border:1px solid #6e6e6e"></div>
<svg class="a" style="left:633px;top:978px;" width="26" height="24" viewBox="0 0 26 24"><rect x="3" y="2" width="16" height="16" fill="#fff" stroke="#111"/><text x="11" y="15" font-size="13" font-weight="bold" text-anchor="middle" font-family="Liberation Serif">A</text><path d="M6 20 L11 16 L16 20 Z" fill="#111"/><path d="M14 13 h9 l-3.5 4 v5 h-2 v-5 z" fill="#b040c8" stroke="#7a1a90" stroke-width="0.6"/></svg>
<div class="a" style="left:659px;top:977px;width:28px;height:26px;background:#a8a8a8;border:1px solid #6e6e6e"></div>
<svg class="a" style="left:660px;top:978px;" width="26" height="24" viewBox="0 0 26 24"><path d="M2 16 L7 6 L11 12 L15 6 L20 4" stroke="#111" stroke-width="1.6" fill="none"/><path d="M4 9 H20" stroke="#111"/><path d="M14 13 h9 l-3.5 4 v5 h-2 v-5 z" fill="#b040c8" stroke="#7a1a90" stroke-width="0.6"/></svg>
<div class="a" style="left:686px;top:977px;width:28px;height:26px;background:#a8a8a8;border:1px solid #6e6e6e"></div>
<svg class="a" style="left:687px;top:978px;" width="26" height="24" viewBox="0 0 26 24"><path d="M3 2 V11 H12" stroke="#4a9ad4" stroke-width="1.6" fill="none"/><path d="M3 14 Q6 17 3 20 M7 14 Q10 17 7 20 M11 14 Q14 17 11 20 M15 14 Q18 17 15 20" stroke="#111" fill="none"/><path d="M14 13 h9 l-3.5 4 v5 h-2 v-5 z" fill="#b040c8" stroke="#7a1a90" stroke-width="0.6"/></svg>
<div class="a" style="left:713px;top:977px;width:28px;height:26px;background:#a8a8a8;border:1px solid #6e6e6e"></div>
<svg class="a" style="left:714px;top:978px;" width="26" height="24" viewBox="0 0 26 24"><path d="M3 12 Q11 2 19 12" fill="#fff" stroke="#111" stroke-width="1.3"/><text x="11" y="15" font-size="8" text-anchor="middle" font-family="Liberation Sans">A</text><path d="M5 15 L2 20" stroke="#111" stroke-width="2"/><path d="M14 13 h9 l-3.5 4 v5 h-2 v-5 z" fill="#b040c8" stroke="#7a1a90" stroke-width="0.6"/></svg>
<div class="a" style="left:740px;top:977px;width:28px;height:26px;background:#a8a8a8;border:1px solid #6e6e6e"></div>
<svg class="a" style="left:741px;top:978px;" width="26" height="24" viewBox="0 0 26 24"><path d="M5 2 H17 V14 L11 20 L5 14 Z" fill="#fff" stroke="#111" stroke-dasharray="2 1"/><path d="M8 14 L11 17 L14 14" stroke="#111" fill="none"/><path d="M14 13 h9 l-3.5 4 v5 h-2 v-5 z" fill="#b040c8" stroke="#7a1a90" stroke-width="0.6"/></svg>
<div class="a" style="left:767px;top:977px;width:28px;height:26px;background:#a8a8a8;border:1px solid #6e6e6e"></div>
<svg class="a" style="left:768px;top:978px;" width="26" height="24" viewBox="0 0 26 24"><rect x="3" y="4" width="15" height="15" fill="#fff" stroke="#111"/><text x="9" y="16" font-size="11" font-weight="bold" text-anchor="middle" font-family="Liberation Serif">A</text><circle cx="16" cy="7" r="2" fill="none" stroke="#111"/><path d="M14 13 h9 l-3.5 4 v5 h-2 v-5 z" fill="#b040c8" stroke="#7a1a90" stroke-width="0.6"/></svg>
<div class="a" style="left:794px;top:977px;width:28px;height:26px;background:#a8a8a8;border:1px solid #6e6e6e"></div>
<svg class="a" style="left:795px;top:978px;" width="26" height="24" viewBox="0 0 26 24"><circle cx="11" cy="11" r="8" fill="#fff" stroke="#111"/><path d="M11 3 A8 8 0 0 1 19 11 H11 Z M11 19 A8 8 0 0 1 3 11 H11 Z" fill="#111"/><path d="M14 13 h9 l-3.5 4 v5 h-2 v-5 z" fill="#b040c8" stroke="#7a1a90" stroke-width="0.6"/></svg>
<div class="a" style="left:821px;top:977px;width:28px;height:26px;background:#a8a8a8;border:1px solid #6e6e6e"></div>
<svg class="a" style="left:822px;top:978px;" width="26" height="24" viewBox="0 0 26 24"><path d="M2 10 H13" stroke="#111" stroke-width="1.6"/><rect x="13" y="5" width="8" height="9" fill="#4a9ad4" stroke="#1d4f7a"/><path d="M14 13 h9 l-3.5 4 v5 h-2 v-5 z" fill="#b040c8" stroke="#7a1a90" stroke-width="0.6"/></svg>
<div class="a" style="left:848px;top:977px;width:28px;height:26px;background:#a8a8a8;border:1px solid #6e6e6e"></div>
<svg class="a" style="left:849px;top:978px;" width="26" height="24" viewBox="0 0 26 24"><path d="M2 10 H22" stroke="#111" stroke-width="1.6"/><rect x="9" y="5" width="8" height="9" fill="#4a9ad4" stroke="#1d4f7a"/><path d="M14 13 h9 l-3.5 4 v5 h-2 v-5 z" fill="#b040c8" stroke="#7a1a90" stroke-width="0.6"/></svg>
<div class="a" style="left:875px;top:977px;width:28px;height:26px;background:#a8a8a8;border:1px solid #6e6e6e"></div>
<svg class="a" style="left:876px;top:978px;" width="26" height="24" viewBox="0 0 26 24"><rect x="2" y="4" width="17" height="15" fill="#4a9ad4" stroke="#1d4f7a"/><path d="M12 8 L17 2 L21 8 L17 15 Z" fill="#fff" stroke="#111"/><path d="M12 8 L21 8 M17 2 V15" stroke="#111"/><path d="M14 13 h9 l-3.5 4 v5 h-2 v-5 z" fill="#b040c8" stroke="#7a1a90" stroke-width="0.6"/></svg>
<div class="a" style="left:902px;top:977px;width:28px;height:26px;background:#a8a8a8;border:1px solid #6e6e6e"></div>
<svg class="a" style="left:903px;top:978px;" width="26" height="24" viewBox="0 0 26 24"><path d="M4 3 V21" stroke="#1d4f7a" stroke-width="2.2"/><path d="M10 8 L15 2 L20 8 L15 15 Z" fill="#fff" stroke="#111"/><path d="M10 8 L20 8 M15 2 V15" stroke="#111"/><path d="M14 13 h9 l-3.5 4 v5 h-2 v-5 z" fill="#b040c8" stroke="#7a1a90" stroke-width="0.6"/></svg>
<div class="a" style="left:929px;top:977px;width:28px;height:26px;background:#a8a8a8;border:1px solid #6e6e6e"></div>
<svg class="a" style="left:930px;top:978px;" width="26" height="24" viewBox="0 0 26 24"><circle cx="5" cy="8" r="2.6" fill="#4a9ad4" stroke="#1d4f7a"/><path d="M11 8 L16 2 L21 8 L16 15 Z" fill="#fff" stroke="#111"/><path d="M11 8 L21 8 M16 2 V15" stroke="#111"/><path d="M14 13 h9 l-3.5 4 v5 h-2 v-5 z" fill="#b040c8" stroke="#7a1a90" stroke-width="0.6"/></svg>
<div class="a" style="left:963px;top:975px;width:1px;height:29px;background:#9a9a9a;"></div>
<div class="a" style="left:0px;top:1005px;width:1381px;height:1px;background:#9a9a9a;"></div>
<div class="a" style="left:0px;top:1006px;width:1381px;height:20px;background:#e6e6e6;"></div>
<div class="t" style="left:0px;top:1012px;font-size:14px;color:#111;font-weight:normal;letter-spacing:-0.1px">SOLIDWORKS Premium 2024 SP3.1</div>
<svg class="a" style="left:0px;top:0px;" width="1381" height="1026" viewBox="0 0 1381 1026"><defs>
<linearGradient id="bodyg" x1="0" x2="1" y1="0" y2="0">
 <stop offset="0" stop-color="#7c8460"/><stop offset="0.12" stop-color="#868d61"/>
 <stop offset="0.45" stop-color="#878e62"/><stop offset="0.6" stop-color="#7c835c"/>
 <stop offset="0.7" stop-color="#60684f"/><stop offset="0.85" stop-color="#525c4a"/>
 <stop offset="1" stop-color="#596148"/>
</linearGradient>
<pattern id="streak" width="9" height="20" patternUnits="userSpaceOnUse">
 <rect x="0" y="0" width="2" height="20" fill="#6a7a70" opacity="0.25"/>
 <rect x="5" y="0" width="1" height="20" fill="#9aa070" opacity="0.25"/>
</pattern>
<radialGradient id="bowl" cx="0.3" cy="0.35" r="0.7">
 <stop offset="0" stop-color="#a8ab86"/><stop offset="0.5" stop-color="#8f9470"/><stop offset="1" stop-color="#767c58"/>
</radialGradient>
<pattern id="dots" width="2" height="2" patternUnits="userSpaceOnUse"><rect width="2" height="2" fill="#fdfefe"/><rect width="1" height="1" fill="#c8eef6"/></pattern>
<radialGradient id="sph" cx="0.38" cy="0.35" r="0.65"><stop offset="0" stop-color="#a8d4f8"/><stop offset="0.5" stop-color="#5a9ee0"/><stop offset="1" stop-color="#3a78b8"/></radialGradient>
<linearGradient id="hg" x1="0" x2="0" y1="0" y2="1"><stop offset="0" stop-color="#0c7876"/><stop offset="0.55" stop-color="#0e8a86"/><stop offset="1" stop-color="#12a59e"/></linearGradient>
</defs><path d="M675 409 L833 327 L1161 398 L1003 481 Z" fill="url(#dots)"/><text x="0" y="0" font-size="11" font-weight="bold" fill="#4a9ef5" stroke="#4a9ef5" stroke-width="0.45" font-family="Liberation Sans" transform="matrix(1.72 -0.89 1.7 0.4 697 413)" letter-spacing="0.4">Plane7</text><path d="M833 327 L858 333" stroke="#50a6f8" stroke-width="1.6" stroke-dasharray="4 3"/><path d="M997 362 L1161 398" stroke="#4a9ef5" stroke-width="2"/><path d="M675 409 L833 327" stroke="#4a9ef5" stroke-width="2"/><path fill-rule="evenodd" fill="url(#hg)" d="M812 229 C800 229 786 238 781 250 C776 262 776 280 779 295 C782 310 792 330 803 350 C812 366 822 380 832 386 L850 386 C857 372 860 355 859 340 C858 320 855 300 852 285 C849 265 843 247 833 236 C826 231 819 229 812 229 Z M812 251 C802 251 792 258 790 270 C787 285 790 300 797 312 C805 328 815 345 825 358 C830 364 838 363 842 356 C845 346 842 325 838 300 C835 282 832 268 825 258 C821 253 817 251 812 251 Z"/><path d="M830 403 V822 A96 38 0 0 0 1022 822 V403 A96 31 0 0 0 830 403 Z" fill="url(#bodyg)"/><clipPath id="bodyclip"><path d="M830 403 V822 A96 38 0 0 0 1022 822 V403 A96 31 0 0 0 830 403 Z"/></clipPath><g clip-path="url(#bodyclip)"><rect x="832" y="400" width="2" height="460" fill="#9aa274" opacity="0.27"/><rect x="836" y="400" width="1" height="460" fill="#4f5a4c" opacity="0.18"/><rect x="846" y="400" width="1" height="460" fill="#4f5a4c" opacity="0.21"/><rect x="849" y="400" width="3" height="460" fill="#8a9270" opacity="0.17"/><rect x="854" y="400" width="4" height="460" fill="#8a9270" opacity="0.17"/><rect x="867" y="400" width="1" height="460" fill="#9aa274" opacity="0.34"/><rect x="877" y="400" width="1" height="460" fill="#4f5a4c" opacity="0.33"/><rect x="880" y="400" width="2" height="460" fill="#6b7a72" opacity="0.32"/><rect x="885" y="400" width="2" height="460" fill="#8a9270" opacity="0.19"/><rect x="889" y="400" width="4" height="460" fill="#5c6650" opacity="0.32"/><rect x="896" y="400" width="1" height="460" fill="#4f5a4c" opacity="0.32"/><rect x="900" y="400" width="2" height="460" fill="#6b7a72" opacity="0.31"/><rect x="904" y="400" width="4" height="460" fill="#6b7a72" opacity="0.34"/><rect x="915" y="400" width="6" height="460" fill="#4f5a4c" opacity="0.28"/><rect x="926" y="400" width="3" height="460" fill="#4f5a4c" opacity="0.43"/><rect x="934" y="400" width="2" height="460" fill="#9aa274" opacity="0.39"/><rect x="939" y="400" width="1" height="460" fill="#4f5a4c" opacity="0.24"/><rect x="947" y="400" width="2" height="460" fill="#8a9270" opacity="0.24"/><rect x="951" y="400" width="1" height="460" fill="#4f5a4c" opacity="0.28"/><rect x="957" y="400" width="2" height="460" fill="#8a9270" opacity="0.28"/><rect x="961" y="400" width="4" height="460" fill="#4f5a4c" opacity="0.39"/><rect x="970" y="400" width="2" height="460" fill="#5c6650" opacity="0.33"/><rect x="981" y="400" width="3" height="460" fill="#6b7a72" opacity="0.40"/><rect x="989" y="400" width="3" height="460" fill="#6b7a72" opacity="0.17"/><rect x="997" y="400" width="6" height="460" fill="#4f5a4c" opacity="0.45"/><rect x="1010" y="400" width="2" height="460" fill="#8a9270" opacity="0.42"/><rect x="1017" y="400" width="1" height="460" fill="#8a9270" opacity="0.26"/></g><path d="M855 717 V520 C855 512 860 510 868 512 L912 524 C919 527 922 531 922 540 V730 C920 738 905 743 885 741 C868 738 855 728 855 717 Z" fill="#858c60" opacity="0.75"/><path d="M832 708 C834 745 855 775 900 784 C940 786 975 760 980 730 Z" fill="url(#bowl)" opacity="0.75"/><path d="M830 475 L945 499 C962 504 979 518 980 534 C970 537 950 538 927 535 L830 513 Z" fill="#6a7257" opacity="0.35"/><ellipse cx="926" cy="403" rx="96" ry="31" fill="#8a9474"/><ellipse cx="925" cy="397" rx="86" ry="25" fill="#14b4ac"/><ellipse cx="925" cy="397" rx="86" ry="25" fill="none" stroke="#50a6f8" stroke-width="1"/><ellipse cx="925" cy="399" rx="80" ry="21" fill="none" stroke="#50a6f8" stroke-width="0.8"/><path d="M852 345 V400 A72 20 0 0 0 996 400 V345 A72 19 0 0 0 852 345 Z" fill="#64a6ea"/><path d="M870 345 Q924 327 980 345" fill="none" stroke="#b8c4cc" stroke-width="2.8" opacity="0.9"/><path d="M873 354 Q924 336 977 354" fill="none" stroke="#b8c4cc" stroke-width="2.8" opacity="0.9"/><path d="M876 363 Q924 345 974 363" fill="none" stroke="#b8c4cc" stroke-width="2.8" opacity="0.9"/><path d="M879 372 Q924 354 971 372" fill="none" stroke="#b8c4cc" stroke-width="2.8" opacity="0.9"/><path d="M868 366 Q924 382 980 366" fill="none" stroke="#84907a" stroke-width="2.6" opacity="0.9"/><path d="M868 374 Q924 390 980 374" fill="none" stroke="#84907a" stroke-width="2.6" opacity="0.9"/><path d="M868 382 Q924 398 980 382" fill="none" stroke="#84907a" stroke-width="2.6" opacity="0.9"/><path d="M868 390 Q924 406 980 390" fill="none" stroke="#84907a" stroke-width="2.6" opacity="0.9"/><path d="M868 398 Q924 414 980 398" fill="none" stroke="#84907a" stroke-width="2.6" opacity="0.9"/><ellipse cx="924" cy="347.0" rx="72" ry="18.5" fill="none" stroke="#4a9cf0" stroke-width="0.9" stroke-dasharray="6 2" opacity="0.8"/><ellipse cx="924" cy="351.4" rx="72" ry="18.3" fill="none" stroke="#4a9cf0" stroke-width="0.9" stroke-dasharray="6 2" opacity="0.8"/><ellipse cx="924" cy="355.8" rx="72" ry="18.1" fill="none" stroke="#4a9cf0" stroke-width="0.9" stroke-dasharray="6 2" opacity="0.8"/><ellipse cx="924" cy="360.2" rx="72" ry="17.9" fill="none" stroke="#4a9cf0" stroke-width="0.9" stroke-dasharray="6 2" opacity="0.8"/><ellipse cx="924" cy="364.6" rx="72" ry="17.7" fill="none" stroke="#4a9cf0" stroke-width="0.9" stroke-dasharray="6 2" opacity="0.8"/><ellipse cx="924" cy="369.0" rx="72" ry="17.5" fill="none" stroke="#4a9cf0" stroke-width="0.9" stroke-dasharray="6 2" opacity="0.8"/><ellipse cx="924" cy="373.4" rx="72" ry="17.3" fill="none" stroke="#4a9cf0" stroke-width="0.9" stroke-dasharray="6 2" opacity="0.8"/><ellipse cx="924" cy="377.8" rx="72" ry="17.1" fill="none" stroke="#4a9cf0" stroke-width="0.9" stroke-dasharray="6 2" opacity="0.8"/><ellipse cx="924" cy="382.2" rx="72" ry="16.9" fill="none" stroke="#4a9cf0" stroke-width="0.9" stroke-dasharray="6 2" opacity="0.8"/><ellipse cx="924" cy="386.6" rx="72" ry="16.7" fill="none" stroke="#4a9cf0" stroke-width="0.9" stroke-dasharray="6 2" opacity="0.8"/><ellipse cx="924" cy="391.0" rx="72" ry="16.5" fill="none" stroke="#4a9cf0" stroke-width="0.9" stroke-dasharray="6 2" opacity="0.8"/><ellipse cx="924" cy="395.4" rx="72" ry="16.3" fill="none" stroke="#4a9cf0" stroke-width="0.9" stroke-dasharray="6 2" opacity="0.8"/><ellipse cx="924" cy="399.8" rx="72" ry="16.1" fill="none" stroke="#4a9cf0" stroke-width="0.9" stroke-dasharray="6 2" opacity="0.8"/><ellipse cx="924" cy="345" rx="72" ry="19" fill="none" stroke="#50a6f8" stroke-width="1.6"/><path d="M852 345 V400 M996 345 V400" stroke="#50a6f8" stroke-width="2"/><path d="M900 370 H942" stroke="#f0e020" stroke-width="1.6"/><path d="M830 403 A96 31 0 0 0 1022 403" fill="none" stroke="#50a6f8" stroke-width="1.5"/><path d="M830 405 A96 33 0 0 0 1022 405" fill="none" stroke="#50a6f8" stroke-width="1.2"/><path d="M830 401 A96 29 0 0 0 1022 401" fill="none" stroke="#50a6f8" stroke-width="1"/><path d="M830 403 A96 31 0 0 1 1022 403" fill="none" stroke="#50a6f8" stroke-width="1.2"/><ellipse cx="924" cy="398" rx="84" ry="24" fill="none" stroke="#50a6f8" stroke-width="1"/><path d="M830 410 A96 26 0 0 0 1022 410" fill="none" stroke="#1a5fd0" stroke-width="2"/><path d="M831 403 V822 M1022 403 V822 M834 420 V818 M1019 420 V818" stroke="#50a6f8" stroke-width="1.4"/><path d="M830 822 A96 38 0 0 0 1022 822" fill="none" stroke="#50a6f8" stroke-width="2"/><path d="M831 815 A95 32 0 0 1 1021 815" fill="none" stroke="#50a6f8" stroke-width="1.4"/><ellipse cx="927.5" cy="824" rx="90.5" ry="26" fill="none" stroke="#50a6f8" stroke-width="1.2"/><ellipse cx="928" cy="821" rx="81" ry="26" fill="none" stroke="#50a6f8" stroke-width="1.6"/><path d="M834 828 A92 30 0 0 0 1018 828" fill="none" stroke="#50a6f8" stroke-width="1"/><ellipse cx="928" cy="814.5" rx="17" ry="7" fill="none" stroke="#50a6f8" stroke-width="1"/><ellipse cx="928" cy="814.5" rx="12" ry="4.5" fill="none" stroke="#50a6f8" stroke-width="0.8"/><path d="M873 677 V472 C873 445 890 431 930 429 L975 429 C1005 430 1019 445 1019 470 V735" fill="none" stroke="#50a6f8" stroke-width="1.3"/><path d="M876 677 V474 C876 448 893 434 930 433 L975 433 C1002 434 1015 448 1016 472 V735" fill="none" stroke="#50a6f8" stroke-width="0.7"/><path d="M928 677 V488 C928 476 934 470 950 470 L967 470 C985 472 997 480 997 495 V690 C997 696 992 698 985 697 L945 688 C934 686 929 682 928 677" fill="none" stroke="#50a6f8" stroke-width="1.3"/><path d="M855 717 V520 C855 512 860 510 868 512 L912 524 C919 527 922 531 922 540 V730 C920 738 905 743 885 741 C868 738 855 728 855 717 Z" fill="none" stroke="#50a6f8" stroke-width="1.3"/><path d="M830 475 L945 499 C962 504 979 518 980 534 C970 537 950 538 927 535 L830 513" fill="none" stroke="#50a6f8" stroke-width="1.3"/><path d="M980 534 V730" fill="none" stroke="#50a6f8" stroke-width="1.3"/><path d="M871 483 Q890 474 910 476 L1020 505" fill="none" stroke="#50a6f8" stroke-width="1"/><path d="M873 677 C885 673 905 673 921 675 L1019 697" fill="none" stroke="#50a6f8" stroke-width="1.3"/><path d="M873 677 C878 694 895 709 921 714 L1019 735" fill="none" stroke="#50a6f8" stroke-width="1.3"/><path d="M832 708 L1022 736" fill="none" stroke="#50a6f8" stroke-width="1.3"/><path d="M832 708 C834 745 855 775 900 784 C940 786 975 760 980 730" fill="none" stroke="#50a6f8" stroke-width="1.3"/><path d="M675 409 L1003 481 L1161 398" stroke="#4a9ef5" stroke-width="2" fill="none"/><circle cx="675" cy="409" r="5" fill="url(#sph)"/><circle cx="755" cy="368" r="5" fill="url(#sph)"/><circle cx="833" cy="327" r="5" fill="url(#sph)"/><circle cx="998" cy="362" r="5" fill="url(#sph)"/><circle cx="1161" cy="398" r="5" fill="url(#sph)"/><circle cx="1081" cy="440" r="5" fill="url(#sph)"/><circle cx="1003" cy="481" r="5" fill="url(#sph)"/><circle cx="839" cy="445" r="5" fill="url(#sph)"/></svg>
<svg class="a" style="left:300px;top:835px;" width="52" height="62" viewBox="0 0 52 62">
<path d="M5 3 L9 9 L13 3 M9 9 V14" stroke="#1a9a1a" stroke-width="1.1" fill="none"/>
<path d="M4 26 L9 14 L15 26 Z" fill="#2a8a2a" stroke="#1a5a1a" stroke-width="0.8"/>
<rect x="7" y="25" width="5" height="24" fill="#1f7a1f" stroke="#0f3f0f" stroke-width="0.8"/>
<path d="M11 47 L24 40 L26 44 L13 51 Z" fill="#b02020" stroke="#5a0f0f" stroke-width="0.6"/>
<path d="M21 38 L31 37 L26 45 Z" fill="#c82020"/>
<path d="M10 49 L32 53 L31 57 L9 53 Z" fill="#1a2abf" stroke="#0a1060" stroke-width="0.6"/>
<path d="M29 48 L42 56 L30 59 Z" fill="#2030c8"/>
<path d="M31 33 L36 40 M36 33 L31 40" stroke="#e02020" stroke-width="1"/>
<path d="M40 51 H47 L40 59 H47" stroke="#2040ff" stroke-width="1.2" fill="none"/>
</svg>
</body></html>
